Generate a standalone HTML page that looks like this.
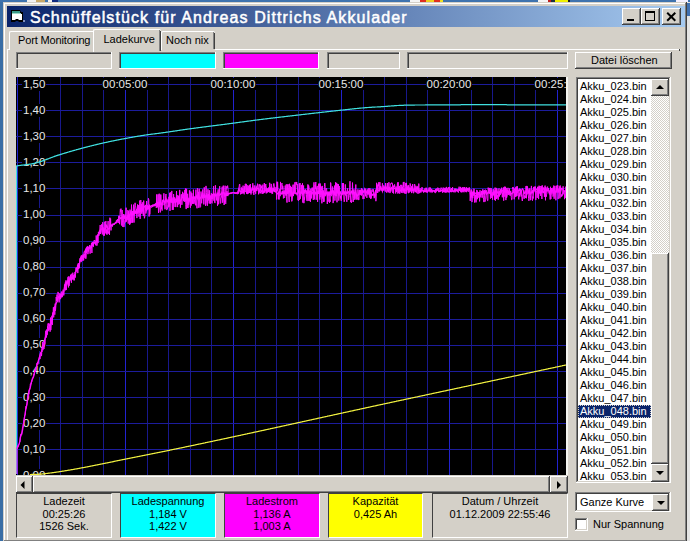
<!DOCTYPE html>
<html><head><meta charset="utf-8"><style>
html,body{margin:0;padding:0;width:690px;height:541px;overflow:hidden;background:#3a6ea5}
.t{position:absolute;font-family:"Liberation Sans",sans-serif;font-size:11px;line-height:13px;color:#000;white-space:pre}
</style></head><body>
<div style="position:absolute;left:0;top:0;width:690px;height:541px;background:#3a6ea5"></div><div style="position:absolute;left:3px;top:2px;width:684px;height:549px;background:#404040"></div><div style="position:absolute;left:3px;top:2px;width:683px;height:549px;background:#d4d0c8"></div><div style="position:absolute;left:4px;top:3px;width:682px;height:549px;background:#808080"></div><div style="position:absolute;left:4px;top:3px;width:681px;height:549px;background:#fff"></div><div style="position:absolute;left:5px;top:4px;width:680px;height:549px;background:#d4d0c8"></div><div style="position:absolute;left:7px;top:6px;width:678px;height:21px;background:linear-gradient(to right,#0a246a 0%,#a6caf0 100%)"></div><svg style="position:absolute;left:10px;top:9px" width="16" height="15" viewBox="0 0 16 15"><path d="M1 1 H10 L11 3 H13 V13 H9 L8 12 H6 L5 13 H1 Z" fill="#000"/><rect x="2" y="2" width="8" height="2" fill="#3a9a88"/><rect x="2" y="4" width="9" height="1" fill="#9ad8c8"/><path d="M2 5 H12 V11 H9 L8 10 H6 L5 11 H2 Z" fill="#fff"/><rect x="13" y="11" width="2" height="2" fill="#8090c0"/></svg><div class="t" style="left:30px;top:9px;color:#fff;font-size:16px;-webkit-text-stroke:0.5px #fff;letter-spacing:1.1px;line-height:18px">Schnüffelstück für Andreas Dittrichs Akkulader</div><div style="position:absolute;left:622px;top:8px;width:19px;height:17px;background:#404040;"><div style="position:absolute;left:0;top:0;width:18px;height:16px;background:#fff"></div><div style="position:absolute;left:1px;top:1px;width:17px;height:15px;background:#808080"></div><div style="position:absolute;left:1px;top:1px;width:16px;height:14px;background:#d4d0c8"></div></div><div style="position:absolute;left:627px;top:19px;width:7px;height:2px;background:#000"></div><div style="position:absolute;left:641px;top:8px;width:19px;height:17px;background:#404040;"><div style="position:absolute;left:0;top:0;width:18px;height:16px;background:#fff"></div><div style="position:absolute;left:1px;top:1px;width:17px;height:15px;background:#808080"></div><div style="position:absolute;left:1px;top:1px;width:16px;height:14px;background:#d4d0c8"></div></div><div style="position:absolute;left:645px;top:11px;width:8px;height:7px;border:1px solid #000;border-top-width:2px"></div><div style="position:absolute;left:662px;top:8px;width:19px;height:17px;background:#404040;"><div style="position:absolute;left:0;top:0;width:18px;height:16px;background:#fff"></div><div style="position:absolute;left:1px;top:1px;width:17px;height:15px;background:#808080"></div><div style="position:absolute;left:1px;top:1px;width:16px;height:14px;background:#d4d0c8"></div></div><svg style="position:absolute;left:666px;top:12px" width="11" height="10" viewBox="0 0 11 10"><path d="M1.2 0.8 L9.3 8.8 M9.3 0.8 L1.2 8.8" stroke="#000" stroke-width="2"/></svg><div style="position:absolute;left:7px;top:49px;width:673px;height:502px;border-top:1px solid #fff;border-left:1px solid #fff;background:#d4d0c8"></div><div style="position:absolute;left:679px;top:49px;width:1px;height:2px;background:#404040"></div><div style="position:absolute;left:9px;top:31px;width:86px;height:18px;background:#d4d0c8;border-top:1px solid #fff;border-left:1px solid #fff;border-radius:2px 2px 0 0"></div><div style="position:absolute;left:94px;top:32px;width:1px;height:17px;background:#808080"></div><div style="position:absolute;left:95px;top:33px;width:1px;height:16px;background:#404040"></div><div class="t" style="left:18px;top:34px;"><span style="letter-spacing:-0.15px">Port Monitoring</span></div><div style="position:absolute;left:161px;top:31px;width:53px;height:18px;background:#d4d0c8;border-top:1px solid #fff;border-left:1px solid #fff;border-radius:2px 2px 0 0"></div><div style="position:absolute;left:213px;top:32px;width:1px;height:17px;background:#808080"></div><div style="position:absolute;left:214px;top:33px;width:1px;height:16px;background:#404040"></div><div class="t" style="left:166px;top:34px;">Noch nix</div><div style="position:absolute;left:93px;top:29px;width:67px;height:22px;background:#d4d0c8;border-top:1px solid #fff;border-left:1px solid #fff;border-radius:2px 2px 0 0"></div><div style="position:absolute;left:159px;top:30px;width:1px;height:21px;background:#808080"></div><div style="position:absolute;left:160px;top:31px;width:1px;height:20px;background:#404040"></div><div class="t" style="left:103.5px;top:33px;">Ladekurve</div><div style="position:absolute;left:16px;top:52px;width:96px;height:17px;background:#fff"><div style="position:absolute;left:0;top:0;width:95px;height:16px;background:#808080"></div><div style="position:absolute;left:1px;top:1px;width:94px;height:15px;background:#404040"></div><div style="position:absolute;left:2px;top:2px;width:93px;height:14px;background:#d4d0c8"></div></div><div style="position:absolute;left:119px;top:52px;width:97px;height:17px;background:#fff"><div style="position:absolute;left:0;top:0;width:96px;height:16px;background:#808080"></div><div style="position:absolute;left:1px;top:1px;width:95px;height:15px;background:#404040"></div><div style="position:absolute;left:2px;top:2px;width:94px;height:14px;background:#00ffff"></div></div><div style="position:absolute;left:223px;top:52px;width:96px;height:17px;background:#fff"><div style="position:absolute;left:0;top:0;width:95px;height:16px;background:#808080"></div><div style="position:absolute;left:1px;top:1px;width:94px;height:15px;background:#404040"></div><div style="position:absolute;left:2px;top:2px;width:93px;height:14px;background:#ff00ff"></div></div><div style="position:absolute;left:327px;top:52px;width:73px;height:17px;background:#fff"><div style="position:absolute;left:0;top:0;width:72px;height:16px;background:#808080"></div><div style="position:absolute;left:1px;top:1px;width:71px;height:15px;background:#404040"></div><div style="position:absolute;left:2px;top:2px;width:70px;height:14px;background:#d4d0c8"></div></div><div style="position:absolute;left:407px;top:52px;width:161px;height:17px;background:#fff"><div style="position:absolute;left:0;top:0;width:160px;height:16px;background:#808080"></div><div style="position:absolute;left:1px;top:1px;width:159px;height:15px;background:#404040"></div><div style="position:absolute;left:2px;top:2px;width:158px;height:14px;background:#d4d0c8"></div></div><div style="position:absolute;left:575px;top:52px;width:97px;height:17px;background:#404040;"><div style="position:absolute;left:0;top:0;width:96px;height:16px;background:#fff"></div><div style="position:absolute;left:1px;top:1px;width:95px;height:15px;background:#808080"></div><div style="position:absolute;left:1px;top:1px;width:94px;height:14px;background:#d4d0c8"></div></div><div class="t" style="left:591px;top:54px;">Datei löschen</div><svg style="position:absolute;left:16px;top:77px" width="550" height="398" viewBox="16 77 550 398" shape-rendering="crispEdges"><rect x="16" y="77" width="550" height="398" fill="#000"/><rect x="17" y="77" width="1" height="398" fill="#2222d0"/><rect x="39" y="77" width="1" height="398" fill="#18188c"/><rect x="60" y="77" width="1" height="398" fill="#18188c"/><rect x="82" y="77" width="1" height="398" fill="#18188c"/><rect x="103" y="77" width="1" height="398" fill="#18188c"/><rect x="125" y="77" width="1" height="398" fill="#2222d0"/><rect x="147" y="77" width="1" height="398" fill="#18188c"/><rect x="168" y="77" width="1" height="398" fill="#18188c"/><rect x="190" y="77" width="1" height="398" fill="#18188c"/><rect x="211" y="77" width="1" height="398" fill="#18188c"/><rect x="233" y="77" width="1" height="398" fill="#2222d0"/><rect x="255" y="77" width="1" height="398" fill="#18188c"/><rect x="276" y="77" width="1" height="398" fill="#18188c"/><rect x="298" y="77" width="1" height="398" fill="#18188c"/><rect x="319" y="77" width="1" height="398" fill="#18188c"/><rect x="341" y="77" width="1" height="398" fill="#2222d0"/><rect x="363" y="77" width="1" height="398" fill="#18188c"/><rect x="384" y="77" width="1" height="398" fill="#18188c"/><rect x="406" y="77" width="1" height="398" fill="#18188c"/><rect x="427" y="77" width="1" height="398" fill="#18188c"/><rect x="449" y="77" width="1" height="398" fill="#2222d0"/><rect x="471" y="77" width="1" height="398" fill="#18188c"/><rect x="492" y="77" width="1" height="398" fill="#18188c"/><rect x="514" y="77" width="1" height="398" fill="#18188c"/><rect x="535" y="77" width="1" height="398" fill="#18188c"/><rect x="557" y="77" width="1" height="398" fill="#2222d0"/><rect x="16" y="84" width="550" height="1" fill="#1c1c9c"/><rect x="16" y="110" width="550" height="1" fill="#1c1c9c"/><rect x="16" y="136" width="550" height="1" fill="#1c1c9c"/><rect x="16" y="162" width="550" height="1" fill="#1c1c9c"/><rect x="16" y="188" width="550" height="1" fill="#1c1c9c"/><rect x="16" y="215" width="550" height="1" fill="#1c1c9c"/><rect x="16" y="241" width="550" height="1" fill="#1c1c9c"/><rect x="16" y="267" width="550" height="1" fill="#1c1c9c"/><rect x="16" y="293" width="550" height="1" fill="#1c1c9c"/><rect x="16" y="319" width="550" height="1" fill="#1c1c9c"/><rect x="16" y="345" width="550" height="1" fill="#1c1c9c"/><rect x="16" y="371" width="550" height="1" fill="#1c1c9c"/><rect x="16" y="397" width="550" height="1" fill="#1c1c9c"/><rect x="16" y="423" width="550" height="1" fill="#1c1c9c"/><rect x="16" y="449" width="550" height="1" fill="#1c1c9c"/><rect x="16" y="475" width="550" height="1" fill="#1c1c9c"/></svg><div style="position:absolute;left:16px;top:77px;width:550px;height:398px;overflow:hidden"><div class="t" style="left:6px;top:0.9000000000000057px;color:#e8e8e8;background:#000;padding:0 1px;font-size:11.5px">1,50</div><div class="t" style="left:6px;top:26.950000000000003px;color:#e8e8e8;background:#000;padding:0 1px;font-size:11.5px">1,40</div><div class="t" style="left:6px;top:53.0px;color:#e8e8e8;background:#000;padding:0 1px;font-size:11.5px">1,30</div><div class="t" style="left:6px;top:79.05000000000001px;color:#e8e8e8;background:#000;padding:0 1px;font-size:11.5px">1,20</div><div class="t" style="left:6px;top:105.10000000000002px;color:#e8e8e8;background:#000;padding:0 1px;font-size:11.5px">1,10</div><div class="t" style="left:6px;top:131.15px;color:#e8e8e8;background:#000;padding:0 1px;font-size:11.5px">1,00</div><div class="t" style="left:6px;top:157.20000000000002px;color:#e8e8e8;background:#000;padding:0 1px;font-size:11.5px">0,90</div><div class="t" style="left:6px;top:183.25px;color:#e8e8e8;background:#000;padding:0 1px;font-size:11.5px">0,80</div><div class="t" style="left:6px;top:209.3px;color:#e8e8e8;background:#000;padding:0 1px;font-size:11.5px">0,70</div><div class="t" style="left:6px;top:235.35000000000002px;color:#e8e8e8;background:#000;padding:0 1px;font-size:11.5px">0,60</div><div class="t" style="left:6px;top:261.4px;color:#e8e8e8;background:#000;padding:0 1px;font-size:11.5px">0,50</div><div class="t" style="left:6px;top:287.45000000000005px;color:#e8e8e8;background:#000;padding:0 1px;font-size:11.5px">0,40</div><div class="t" style="left:6px;top:313.5px;color:#e8e8e8;background:#000;padding:0 1px;font-size:11.5px">0,30</div><div class="t" style="left:6px;top:339.55000000000007px;color:#e8e8e8;background:#000;padding:0 1px;font-size:11.5px">0,20</div><div class="t" style="left:6px;top:365.6px;color:#e8e8e8;background:#000;padding:0 1px;font-size:11.5px">0,10</div><div class="t" style="left:6px;top:391.65px;color:#e8e8e8;background:#000;padding:0 1px;font-size:11.5px">0,00</div><div class="t" style="left:69.0px;top:0.9px;width:80px;text-align:center;color:#e8e8e8;font-size:11.5px"><span style="background:#000;padding:0 1px">00:05:00</span></div><div class="t" style="left:177.0px;top:0.9px;width:80px;text-align:center;color:#e8e8e8;font-size:11.5px"><span style="background:#000;padding:0 1px">00:10:00</span></div><div class="t" style="left:285.0px;top:0.9px;width:80px;text-align:center;color:#e8e8e8;font-size:11.5px"><span style="background:#000;padding:0 1px">00:15:00</span></div><div class="t" style="left:393.0px;top:0.9px;width:80px;text-align:center;color:#e8e8e8;font-size:11.5px"><span style="background:#000;padding:0 1px">00:20:00</span></div><div class="t" style="left:501.0px;top:0.9px;width:80px;text-align:center;color:#e8e8e8;font-size:11.5px"><span style="background:#000;padding:0 1px">00:25:00</span></div></div><svg style="position:absolute;left:16px;top:77px" width="550" height="398" viewBox="16 77 550 398"><polyline points="16.5,474.0 16.5,165.9 17.0,165.8 17.5,165.8 18.0,165.7 18.5,165.6 19.0,165.6 19.5,165.5 20.0,165.4 20.5,165.4 21.0,165.3 21.5,165.2 22.0,165.2 22.5,165.1 23.0,165.1 23.5,165.0 24.0,164.9 24.5,164.9 25.0,164.8 25.5,164.8 26.0,164.7 26.5,164.6 27.0,164.6 27.5,164.5 28.0,164.4 28.5,164.4 29.0,164.3 29.5,164.2 30.0,164.1 30.5,164.1 31.0,164.0 31.5,163.9 32.0,163.8 32.5,163.7 33.0,163.6 33.5,163.5 34.0,163.4 34.5,163.3 35.0,163.2 35.5,163.0 36.0,162.9 36.5,162.8 37.0,162.7 37.5,162.5 38.0,162.4 38.5,162.2 39.0,162.1 39.5,161.9 40.0,161.8 40.5,161.6 41.0,161.4 41.5,161.3 42.0,161.1 42.5,160.9 43.0,160.7 43.5,160.6 44.0,160.4 44.5,160.2 45.0,160.0 45.5,159.8 46.0,159.6 46.5,159.4 47.0,159.2 47.5,159.1 48.0,158.9 48.5,158.7 49.0,158.5 49.5,158.3 50.0,158.1 50.5,157.9 51.0,157.7 51.5,157.5 52.0,157.3 52.5,157.2 53.0,157.0 53.5,156.8 54.0,156.6 54.5,156.4 55.0,156.2 55.5,156.1 56.0,155.9 56.5,155.7 57.0,155.6 57.5,155.4 58.0,155.2 58.5,155.1 59.0,154.9 59.5,154.8 60.0,154.6 60.5,154.4 61.0,154.3 61.5,154.1 62.0,154.0 62.5,153.8 63.0,153.7 63.5,153.5 64.0,153.4 64.5,153.2 65.0,153.1 65.5,152.9 66.0,152.8 66.5,152.6 67.0,152.5 67.5,152.3 68.0,152.2 68.5,152.0 69.0,151.9 69.5,151.7 70.0,151.6 70.5,151.4 71.0,151.3 71.5,151.2 72.0,151.0 72.5,150.9 73.0,150.7 73.5,150.6 74.0,150.4 74.5,150.3 75.0,150.2 75.5,150.0 76.0,149.9 76.5,149.7 77.0,149.6 77.5,149.5 78.0,149.3 78.5,149.2 79.0,149.1 79.5,148.9 80.0,148.8 80.5,148.6 81.0,148.5 81.5,148.4 82.0,148.2 82.5,148.1 83.0,148.0 83.5,147.8 84.0,147.7 84.5,147.6 85.0,147.4 85.5,147.3 86.0,147.2 86.5,147.1 87.0,146.9 87.5,146.8 88.0,146.7 88.5,146.5 89.0,146.4 89.5,146.3 90.0,146.2 90.5,146.0 91.0,145.9 91.5,145.8 92.0,145.7 92.5,145.5 93.0,145.4 93.5,145.3 94.0,145.2 94.5,145.0 95.0,144.9 95.5,144.8 96.0,144.7 96.5,144.6 97.0,144.4 97.5,144.3 98.0,144.2 98.5,144.1 99.0,144.0 99.5,143.8 100.0,143.7 100.5,143.6 101.0,143.5 101.5,143.4 102.0,143.3 102.5,143.2 103.0,143.0 103.5,142.9 104.0,142.8 104.5,142.7 105.0,142.6 105.5,142.5 106.0,142.4 106.5,142.3 107.0,142.2 107.5,142.1 108.0,142.0 108.5,141.8 109.0,141.7 109.5,141.6 110.0,141.5 110.5,141.4 111.0,141.3 111.5,141.2 112.0,141.1 112.5,141.0 113.0,140.9 113.5,140.8 114.0,140.7 114.5,140.6 115.0,140.5 115.5,140.4 116.0,140.3 116.5,140.2 117.0,140.1 117.5,140.0 118.0,139.9 118.5,139.8 119.0,139.7 119.5,139.6 120.0,139.5 120.5,139.4 121.0,139.3 121.5,139.2 122.0,139.1 122.5,139.0 123.0,138.9 123.5,138.8 124.0,138.8 124.5,138.7 125.0,138.6 125.5,138.5 126.0,138.4 126.5,138.3 127.0,138.2 127.5,138.1 128.0,138.0 128.5,137.9 129.0,137.8 129.5,137.7 130.0,137.6 130.5,137.5 131.0,137.5 131.5,137.4 132.0,137.3 132.5,137.2 133.0,137.1 133.5,137.0 134.0,136.9 134.5,136.8 135.0,136.7 135.5,136.7 136.0,136.6 136.5,136.5 137.0,136.4 137.5,136.3 138.0,136.2 138.5,136.1 139.0,136.1 139.5,136.0 140.0,135.9 140.5,135.8 141.0,135.7 141.5,135.7 142.0,135.6 142.5,135.5 143.0,135.4 143.5,135.3 144.0,135.3 144.5,135.2 145.0,135.1 145.5,135.0 146.0,135.0 146.5,134.9 147.0,134.8 147.5,134.7 148.0,134.7 148.5,134.6 149.0,134.5 149.5,134.5 150.0,134.4 150.5,134.3 151.0,134.3 151.5,134.2 152.0,134.1 152.5,134.1 153.0,134.0 153.5,134.0 154.0,133.9 154.5,133.8 155.0,133.8 155.5,133.7 156.0,133.6 156.5,133.6 157.0,133.5 157.5,133.5 158.0,133.4 158.5,133.3 159.0,133.3 159.5,133.2 160.0,133.1 160.5,133.1 161.0,133.0 161.5,132.9 162.0,132.9 162.5,132.8 163.0,132.7 163.5,132.7 164.0,132.6 164.5,132.5 165.0,132.5 165.5,132.4 166.0,132.3 166.5,132.2 167.0,132.2 167.5,132.1 168.0,132.0 168.5,132.0 169.0,131.9 169.5,131.8 170.0,131.7 170.5,131.7 171.0,131.6 171.5,131.5 172.0,131.4 172.5,131.4 173.0,131.3 173.5,131.2 174.0,131.1 174.5,131.1 175.0,131.0 175.5,130.9 176.0,130.8 176.5,130.8 177.0,130.7 177.5,130.6 178.0,130.5 178.5,130.5 179.0,130.4 179.5,130.3 180.0,130.2 180.5,130.2 181.0,130.1 181.5,130.0 182.0,129.9 182.5,129.9 183.0,129.8 183.5,129.7 184.0,129.7 184.5,129.6 185.0,129.5 185.5,129.4 186.0,129.4 186.5,129.3 187.0,129.2 187.5,129.1 188.0,129.1 188.5,129.0 189.0,128.9 189.5,128.9 190.0,128.8 190.5,128.7 191.0,128.7 191.5,128.6 192.0,128.5 192.5,128.5 193.0,128.4 193.5,128.3 194.0,128.3 194.5,128.2 195.0,128.1 195.5,128.1 196.0,128.0 196.5,127.9 197.0,127.9 197.5,127.8 198.0,127.7 198.5,127.7 199.0,127.6 199.5,127.5 200.0,127.5 200.5,127.4 201.0,127.3 201.5,127.3 202.0,127.2 202.5,127.1 203.0,127.1 203.5,127.0 204.0,126.9 204.5,126.9 205.0,126.8 205.5,126.8 206.0,126.7 206.5,126.6 207.0,126.6 207.5,126.5 208.0,126.4 208.5,126.4 209.0,126.3 209.5,126.2 210.0,126.2 210.5,126.1 211.0,126.1 211.5,126.0 212.0,125.9 212.5,125.9 213.0,125.8 213.5,125.7 214.0,125.7 214.5,125.6 215.0,125.6 215.5,125.5 216.0,125.4 216.5,125.4 217.0,125.3 217.5,125.2 218.0,125.2 218.5,125.1 219.0,125.0 219.5,125.0 220.0,124.9 220.5,124.8 221.0,124.8 221.5,124.7 222.0,124.7 222.5,124.6 223.0,124.5 223.5,124.5 224.0,124.4 224.5,124.3 225.0,124.3 225.5,124.2 226.0,124.1 226.5,124.1 227.0,124.0 227.5,123.9 228.0,123.9 228.5,123.8 229.0,123.7 229.5,123.7 230.0,123.6 230.5,123.5 231.0,123.5 231.5,123.4 232.0,123.3 232.5,123.3 233.0,123.2 233.5,123.1 234.0,123.1 234.5,123.0 235.0,122.9 235.5,122.9 236.0,122.8 236.5,122.7 237.0,122.7 237.5,122.6 238.0,122.5 238.5,122.5 239.0,122.4 239.5,122.3 240.0,122.2 240.5,122.2 241.0,122.1 241.5,122.0 242.0,122.0 242.5,121.9 243.0,121.8 243.5,121.8 244.0,121.7 244.5,121.6 245.0,121.6 245.5,121.5 246.0,121.4 246.5,121.4 247.0,121.3 247.5,121.2 248.0,121.2 248.5,121.1 249.0,121.0 249.5,121.0 250.0,120.9 250.5,120.8 251.0,120.8 251.5,120.7 252.0,120.6 252.5,120.6 253.0,120.5 253.5,120.4 254.0,120.4 254.5,120.3 255.0,120.2 255.5,120.2 256.0,120.1 256.5,120.0 257.0,120.0 257.5,119.9 258.0,119.9 258.5,119.8 259.0,119.7 259.5,119.7 260.0,119.6 260.5,119.5 261.0,119.5 261.5,119.4 262.0,119.3 262.5,119.3 263.0,119.2 263.5,119.2 264.0,119.1 264.5,119.0 265.0,119.0 265.5,118.9 266.0,118.9 266.5,118.8 267.0,118.7 267.5,118.7 268.0,118.6 268.5,118.5 269.0,118.5 269.5,118.4 270.0,118.4 270.5,118.3 271.0,118.2 271.5,118.2 272.0,118.1 272.5,118.1 273.0,118.0 273.5,117.9 274.0,117.9 274.5,117.8 275.0,117.8 275.5,117.7 276.0,117.6 276.5,117.6 277.0,117.5 277.5,117.5 278.0,117.4 278.5,117.3 279.0,117.3 279.5,117.2 280.0,117.2 280.5,117.1 281.0,117.0 281.5,117.0 282.0,116.9 282.5,116.9 283.0,116.8 283.5,116.8 284.0,116.7 284.5,116.6 285.0,116.6 285.5,116.5 286.0,116.5 286.5,116.4 287.0,116.3 287.5,116.3 288.0,116.2 288.5,116.2 289.0,116.1 289.5,116.1 290.0,116.0 290.5,115.9 291.0,115.9 291.5,115.8 292.0,115.8 292.5,115.7 293.0,115.6 293.5,115.6 294.0,115.5 294.5,115.5 295.0,115.4 295.5,115.4 296.0,115.3 296.5,115.2 297.0,115.2 297.5,115.1 298.0,115.1 298.5,115.0 299.0,115.0 299.5,114.9 300.0,114.8 300.5,114.8 301.0,114.7 301.5,114.7 302.0,114.6 302.5,114.5 303.0,114.5 303.5,114.4 304.0,114.4 304.5,114.3 305.0,114.3 305.5,114.2 306.0,114.1 306.5,114.1 307.0,114.0 307.5,114.0 308.0,113.9 308.5,113.9 309.0,113.8 309.5,113.7 310.0,113.7 310.5,113.6 311.0,113.6 311.5,113.5 312.0,113.4 312.5,113.4 313.0,113.3 313.5,113.3 314.0,113.2 314.5,113.2 315.0,113.1 315.5,113.0 316.0,113.0 316.5,112.9 317.0,112.9 317.5,112.8 318.0,112.8 318.5,112.7 319.0,112.6 319.5,112.6 320.0,112.5 320.5,112.5 321.0,112.4 321.5,112.4 322.0,112.3 322.5,112.2 323.0,112.2 323.5,112.1 324.0,112.1 324.5,112.0 325.0,112.0 325.5,111.9 326.0,111.8 326.5,111.8 327.0,111.7 327.5,111.7 328.0,111.6 328.5,111.6 329.0,111.5 329.5,111.5 330.0,111.4 330.5,111.3 331.0,111.3 331.5,111.2 332.0,111.2 332.5,111.1 333.0,111.1 333.5,111.0 334.0,111.0 334.5,110.9 335.0,110.8 335.5,110.8 336.0,110.7 336.5,110.7 337.0,110.6 337.5,110.6 338.0,110.5 338.5,110.5 339.0,110.4 339.5,110.4 340.0,110.3 340.5,110.2 341.0,110.2 341.5,110.1 342.0,110.1 342.5,110.0 343.0,110.0 343.5,109.9 344.0,109.9 344.5,109.8 345.0,109.8 345.5,109.7 346.0,109.6 346.5,109.6 347.0,109.5 347.5,109.5 348.0,109.4 348.5,109.4 349.0,109.3 349.5,109.3 350.0,109.2 350.5,109.2 351.0,109.1 351.5,109.1 352.0,109.0 352.5,108.9 353.0,108.9 353.5,108.8 354.0,108.8 354.5,108.7 355.0,108.7 355.5,108.6 356.0,108.6 356.5,108.5 357.0,108.5 357.5,108.4 358.0,108.4 358.5,108.3 359.0,108.3 359.5,108.2 360.0,108.2 360.5,108.1 361.0,108.1 361.5,108.0 362.0,108.0 362.5,108.0 363.0,107.9 363.5,107.9 364.0,107.8 364.5,107.8 365.0,107.7 365.5,107.7 366.0,107.7 366.5,107.6 367.0,107.6 367.5,107.5 368.0,107.5 368.5,107.5 369.0,107.4 369.5,107.4 370.0,107.4 370.5,107.3 371.0,107.3 371.5,107.3 372.0,107.2 372.5,107.2 373.0,107.2 373.5,107.2 374.0,107.1 374.5,107.1 375.0,107.1 375.5,107.0 376.0,107.0 376.5,107.0 377.0,107.0 377.5,106.9 378.0,106.9 378.5,106.9 379.0,106.8 379.5,106.8 380.0,106.8 380.5,106.8 381.0,106.7 381.5,106.7 382.0,106.7 382.5,106.6 383.0,106.6 383.5,106.6 384.0,106.5 384.5,106.5 385.0,106.5 385.5,106.4 386.0,106.4 386.5,106.3 387.0,106.3 387.5,106.3 388.0,106.2 388.5,106.2 389.0,106.1 389.5,106.1 390.0,106.1 390.5,106.0 391.0,106.0 391.5,105.9 392.0,105.9 392.5,105.9 393.0,105.8 393.5,105.8 394.0,105.8 394.5,105.7 395.0,105.7 395.5,105.6 396.0,105.6 396.5,105.6 397.0,105.5 397.5,105.5 398.0,105.5 398.5,105.5 399.0,105.4 399.5,105.4 400.0,105.4 400.5,105.4 401.0,105.3 401.5,105.3 402.0,105.3 402.5,105.3 403.0,105.3 403.5,105.3 404.0,105.2 404.5,105.2 405.0,105.2 405.5,105.2 406.0,105.2 406.5,105.2 407.0,105.2 407.5,105.2 408.0,105.1 408.5,105.1 409.0,105.1 409.5,105.1 410.0,105.1 410.5,105.1 411.0,105.1 411.5,105.1 412.0,105.1 412.5,105.1 413.0,105.1 413.5,105.1 414.0,105.1 414.5,105.1 415.0,105.0 415.5,105.0 416.0,105.0 416.5,105.0 417.0,105.0 417.5,105.0 418.0,105.0 418.5,105.0 419.0,105.0 419.5,105.0 420.0,105.0 420.5,105.0 421.0,105.0 421.5,105.0 422.0,105.0 422.5,105.0 423.0,105.0 423.5,105.0 424.0,105.0 424.5,105.0 425.0,105.0 425.5,104.9 426.0,104.9 426.5,104.9 427.0,104.9 427.5,104.9 428.0,104.9 428.5,104.9 429.0,104.9 429.5,104.9 430.0,104.9 430.5,104.9 431.0,104.9 431.5,104.9 432.0,104.9 432.5,104.9 433.0,104.9 433.5,104.9 434.0,104.9 434.5,104.9 435.0,104.9 435.5,104.9 436.0,104.9 436.5,104.9 437.0,104.9 437.5,104.9 438.0,104.8 438.5,104.8 439.0,104.8 439.5,104.8 440.0,104.8 440.5,104.8 441.0,104.8 441.5,104.8 442.0,104.8 442.5,104.8 443.0,104.8 443.5,104.8 444.0,104.8 444.5,104.8 445.0,104.8 445.5,104.8 446.0,104.8 446.5,104.8 447.0,104.8 447.5,104.8 448.0,104.8 448.5,104.8 449.0,104.8 449.5,104.8 450.0,104.8 450.5,104.8 451.0,104.8 451.5,104.8 452.0,104.8 452.5,104.8 453.0,104.8 453.5,104.8 454.0,104.8 454.5,104.8 455.0,104.8 455.5,104.8 456.0,104.8 456.5,104.8 457.0,104.8 457.5,104.8 458.0,104.8 458.5,104.8 459.0,104.8 459.5,104.8 460.0,104.8 460.5,104.8 461.0,104.7 461.5,104.7 462.0,104.7 462.5,104.7 463.0,104.7 463.5,104.7 464.0,104.7 464.5,104.7 465.0,104.7 465.5,104.7 466.0,104.7 466.5,104.7 467.0,104.7 467.5,104.7 468.0,104.7 468.5,104.7 469.0,104.7 469.5,104.7 470.0,104.7 470.5,104.7 471.0,104.7 471.5,104.7 472.0,104.7 472.5,104.7 473.0,104.7 473.5,104.7 474.0,104.7 474.5,104.7 475.0,104.7 475.5,104.7 476.0,104.7 476.5,104.7 477.0,104.7 477.5,104.7 478.0,104.7 478.5,104.7 479.0,104.7 479.5,104.7 480.0,104.7 480.5,104.7 481.0,104.7 481.5,104.7 482.0,104.7 482.5,104.7 483.0,104.7 483.5,104.7 484.0,104.7 484.5,104.7 485.0,104.7 485.5,104.7 486.0,104.7 486.5,104.7 487.0,104.7 487.5,104.7 488.0,104.7 488.5,104.7 489.0,104.7 489.5,104.7 490.0,104.7 490.5,104.7 491.0,104.7 491.5,104.7 492.0,104.7 492.5,104.7 493.0,104.7 493.5,104.7 494.0,104.7 494.5,104.7 495.0,104.7 495.5,104.7 496.0,104.7 496.5,104.7 497.0,104.7 497.5,104.7 498.0,104.7 498.5,104.7 499.0,104.7 499.5,104.7 500.0,104.7 500.5,104.7 501.0,104.7 501.5,104.7 502.0,104.7 502.5,104.7 503.0,104.7 503.5,104.7 504.0,104.7 504.5,104.7 505.0,104.7 505.5,104.7 506.0,104.7 506.5,104.7 507.0,104.8 507.5,104.8 508.0,104.8 508.5,104.8 509.0,104.8 509.5,104.8 510.0,104.8 510.5,104.8 511.0,104.8 511.5,104.8 512.0,104.8 512.5,104.8 513.0,104.8 513.5,104.8 514.0,104.8 514.5,104.8 515.0,104.8 515.5,104.8 516.0,104.8 516.5,104.8 517.0,104.8 517.5,104.8 518.0,104.8 518.5,104.8 519.0,104.8 519.5,104.8 520.0,104.8 520.5,104.8 521.0,104.8 521.5,104.8 522.0,104.8 522.5,104.8 523.0,104.8 523.5,104.8 524.0,104.8 524.5,104.8 525.0,104.8 525.5,104.8 526.0,104.8 526.5,104.8 527.0,104.8 527.5,104.8 528.0,104.8 528.5,104.8 529.0,104.8 529.5,104.8 530.0,104.8 530.5,104.8 531.0,104.8 531.5,104.8 532.0,104.8 532.5,104.8 533.0,104.8 533.5,104.8 534.0,104.8 534.5,104.8 535.0,104.8 535.5,104.8 536.0,104.8 536.5,104.8 537.0,104.8 537.5,104.8 538.0,104.8 538.5,104.8 539.0,104.8 539.5,104.8 540.0,104.8 540.5,104.8 541.0,104.8 541.5,104.8 542.0,104.8 542.5,104.8 543.0,104.8 543.5,104.8 544.0,104.8 544.5,104.8 545.0,104.8 545.5,104.8 546.0,104.8 546.5,104.8 547.0,104.8 547.5,104.8 548.0,104.8 548.5,104.8 549.0,104.8 549.5,104.8 550.0,104.8 550.5,104.8 551.0,104.8 551.5,104.8 552.0,104.8 552.5,104.8 553.0,104.8 553.5,104.8 554.0,104.8 554.5,104.8 555.0,104.8 555.5,104.8 556.0,104.8 556.5,104.8 557.0,104.8 557.5,104.8 558.0,104.8 558.5,104.8 559.0,104.8 559.5,104.8 560.0,104.8 560.5,104.8 561.0,104.8 561.5,104.8 562.0,104.8 562.5,104.8 563.0,104.8 563.5,104.8 564.0,104.8 564.5,104.8 565.0,104.8 565.5,104.8 566.0,104.8" fill="none" stroke="#40e0e0" stroke-width="1.2"/><polyline points="17.0,474.0 17.0,450.0 17.0,448.6 17.4,446.2 17.7,445.6 18.1,446.6 18.4,445.7 18.8,444.5 19.2,444.2 19.5,442.1 19.9,442.0 20.2,437.7 20.6,434.8 21.0,433.8 21.3,435.1 21.7,434.6 22.0,431.8 22.4,428.3 22.8,426.9 23.1,427.1 23.5,422.6 23.8,421.9 24.2,419.1 24.6,415.6 24.9,415.5 25.3,414.8 25.6,409.1 26.0,406.1 26.4,408.2 26.7,405.0 27.1,403.4 27.4,398.3 27.8,395.8 28.2,394.5 28.5,393.0 28.9,394.3 29.2,389.8 29.6,389.9 30.0,389.2 30.3,383.8 30.7,384.1 31.0,384.3 31.4,382.3 31.8,381.9 32.1,380.0 32.5,379.8 32.8,378.0 33.2,377.9 33.6,377.1 33.9,374.3 34.3,374.9 34.6,369.8 35.0,371.9 35.4,370.6 35.7,368.1 36.1,369.5 36.4,366.8 36.8,363.4 37.2,363.9 37.5,362.1 37.9,364.4 38.2,363.2 38.6,359.6 39.0,359.6 39.3,358.5 39.7,356.7 40.0,359.1 40.4,355.2 40.8,354.9 41.1,352.5 41.5,356.1 41.8,352.4 42.2,352.0 42.6,341.9 42.9,350.2 43.3,346.3 43.6,346.9 44.0,348.9 44.4,341.5 44.7,344.5 45.1,343.3 45.4,334.1 45.8,330.7 46.2,337.7 46.5,333.1 46.9,329.3 47.2,334.8 47.6,325.3 48.0,323.9 48.3,323.1 48.7,326.2 49.0,330.0 49.4,326.7 49.8,323.6 50.1,331.7 50.5,317.6 50.8,330.1 51.2,324.2 51.6,323.0 51.9,315.7 52.3,324.9 52.6,312.6 53.0,314.8 53.4,307.3 53.7,317.4 54.1,309.0 54.4,306.5 54.8,314.7 55.2,303.6 55.5,310.7 55.9,305.5 56.2,297.0 56.6,301.1 57.0,294.5 57.3,297.7 57.7,300.7 58.0,291.9 58.4,294.0 58.8,293.9 59.1,302.4 59.5,297.9 59.8,293.3 60.2,297.6 60.6,293.8 60.9,297.5 61.3,291.8 61.6,291.5 62.0,297.2 62.4,296.7 62.7,295.2 63.1,289.7 63.4,290.9 63.8,295.4 64.2,290.5 64.5,284.5 64.9,285.9 65.2,286.3 65.6,290.3 66.0,280.3 66.3,290.0 66.7,286.6 67.0,285.1 67.4,284.0 67.8,277.6 68.1,276.8 68.5,287.4 68.8,276.4 69.2,285.8 69.6,278.5 69.9,277.7 70.3,277.5 70.6,274.7 71.0,278.0 71.4,282.8 71.7,273.8 72.1,274.8 72.4,279.4 72.8,272.7 73.2,276.3 73.5,279.4 73.9,275.8 74.2,280.4 74.6,278.2 75.0,271.9 75.3,277.5 75.7,270.0 76.0,267.7 76.4,269.7 76.8,267.4 77.1,269.7 77.5,264.7 77.8,273.1 78.2,263.4 78.6,268.9 78.9,263.0 79.3,268.2 79.6,260.0 80.0,258.0 80.4,258.4 80.7,257.7 81.1,262.1 81.4,255.3 81.8,258.8 82.2,260.8 82.5,255.9 82.9,254.5 83.2,256.8 83.6,260.5 84.0,257.4 84.3,255.4 84.7,253.8 85.0,258.0 85.4,252.1 85.8,258.8 86.1,257.3 86.5,247.4 86.8,252.3 87.2,246.2 87.6,246.4 87.9,254.2 88.3,250.9 88.6,246.9 89.0,246.8 89.4,248.5 89.7,245.0 90.1,253.7 90.4,247.8 90.8,247.6 91.2,245.9 91.5,243.0 91.9,253.0 92.2,242.3 92.6,245.9 93.0,242.0 93.3,246.7 93.7,243.4 94.0,240.6 94.4,241.1 94.8,240.0 95.1,242.2 95.5,244.4 95.8,245.3 96.2,235.5 96.6,240.7 96.9,245.7 97.3,242.7 97.6,234.5 98.0,243.1 98.4,232.0 98.7,234.7 99.1,231.5 99.4,230.5 99.8,230.5 100.2,225.0 100.5,233.4 100.9,232.2 101.2,229.2 101.6,224.8 102.0,224.0 102.3,234.4 102.7,222.2 103.0,224.5 103.4,235.3 103.8,235.8 104.1,229.7 104.5,235.5 104.8,221.7 105.2,233.2 105.6,223.7 105.9,221.1 106.3,234.1 106.6,229.5 107.0,234.7 107.4,233.1 107.7,228.3 108.1,221.1 108.4,233.6 108.8,232.1 109.2,231.5 109.5,234.9 109.9,217.7 110.2,226.6 110.6,218.6 111.0,230.4 111.3,225.4 111.7,225.2 112.0,225.1 112.4,226.6 112.8,223.7 113.1,223.4 113.5,224.1 113.8,225.0 114.2,224.0 114.6,224.4 114.9,223.6 115.3,222.5 115.6,222.6 116.0,223.5 116.4,220.4 116.7,222.8 117.1,221.6 117.4,219.1 117.8,220.8 118.2,223.0 118.5,218.2 118.9,216.0 119.2,221.8 119.6,224.2 120.0,214.4 120.3,209.4 120.7,211.6 121.0,208.6 121.4,225.4 121.8,225.4 122.1,210.0 122.5,220.9 122.8,226.9 123.2,222.6 123.6,214.1 123.9,227.1 124.3,224.1 124.6,223.1 125.0,219.1 125.4,214.6 125.7,222.3 126.1,207.7 126.4,221.6 126.8,218.9 127.2,220.2 127.5,219.0 127.9,210.1 128.2,223.6 128.6,211.2 129.0,219.7 129.3,216.2 129.7,224.9 130.0,209.6 130.4,223.5 130.8,217.7 131.1,218.8 131.5,204.6 131.8,222.8 132.2,213.3 132.6,222.6 132.9,219.6 133.3,208.9 133.6,204.6 134.0,222.6 134.4,214.0 134.7,206.9 135.1,202.8 135.4,205.4 135.8,207.0 136.2,211.2 136.5,208.9 136.9,218.1 137.2,212.8 137.6,204.4 138.0,212.3 138.3,205.1 138.7,214.8 139.0,216.7 139.4,213.6 139.8,200.5 140.1,218.9 140.5,212.5 140.8,200.0 141.2,213.0 141.6,204.1 141.9,213.9 142.3,202.3 142.6,211.7 143.0,212.8 143.4,216.0 143.7,200.6 144.1,214.1 144.4,218.3 144.8,216.9 145.2,205.8 145.5,204.9 145.9,213.5 146.2,210.7 146.6,201.0 147.0,209.6 147.3,205.2 147.7,209.3 148.0,208.3 148.4,198.3 148.8,199.7 149.1,216.5 149.5,204.7 149.8,214.5 150.2,207.7 150.6,207.1 150.9,206.6 151.3,206.7 151.6,207.5 152.0,207.3 152.4,205.1 152.7,206.8 153.1,205.5 153.4,204.7 153.8,205.5 154.2,206.3 154.5,204.2 154.9,205.9 155.2,204.6 155.6,205.8 156.0,203.1 156.3,207.9 156.7,194.4 157.0,200.9 157.4,207.4 157.8,203.6 158.1,194.4 158.5,213.0 158.8,206.1 159.2,193.7 159.6,207.5 159.9,207.8 160.3,212.4 160.6,194.7 161.0,194.5 161.4,209.1 161.7,206.3 162.1,210.6 162.4,200.2 162.8,205.3 163.2,201.9 163.5,198.6 163.9,193.3 164.2,205.1 164.6,203.3 165.0,209.3 165.3,204.6 165.7,195.3 166.0,194.0 166.4,208.6 166.8,210.1 167.1,207.5 167.5,209.1 167.8,204.2 168.2,199.5 168.6,207.3 168.9,196.8 169.3,206.5 169.6,192.8 170.0,210.9 170.4,195.8 170.7,192.3 171.1,201.3 171.4,202.2 171.8,190.9 172.2,210.0 172.5,209.3 172.9,197.5 173.2,209.9 173.6,194.1 174.0,202.8 174.3,202.0 174.7,197.3 175.0,206.9 175.4,200.3 175.8,207.1 176.1,203.8 176.5,191.0 176.8,200.8 177.2,195.1 177.6,207.1 177.9,197.6 178.3,204.6 178.6,195.8 179.0,195.7 179.4,203.9 179.7,189.9 180.1,203.9 180.4,207.7 180.8,199.3 181.2,194.3 181.5,194.4 181.9,204.8 182.2,199.0 182.6,191.8 183.0,197.9 183.3,194.6 183.7,201.0 184.0,192.9 184.4,200.5 184.8,189.9 185.1,201.5 185.5,188.5 185.8,204.6 186.2,209.1 186.6,188.8 186.9,208.0 187.3,207.6 187.6,193.8 188.0,208.0 188.4,201.4 188.7,204.7 189.1,200.3 189.4,190.3 189.8,197.9 190.2,207.1 190.5,207.8 190.9,191.5 191.2,205.6 191.6,193.3 192.0,193.2 192.3,203.6 192.7,197.9 193.0,204.0 193.4,189.6 193.8,203.6 194.1,203.7 194.5,199.8 194.8,199.3 195.2,204.0 195.6,205.3 195.9,189.6 196.3,203.9 196.6,203.8 197.0,208.3 197.4,188.2 197.7,189.5 198.1,195.2 198.4,191.9 198.8,207.8 199.2,188.7 199.5,198.5 199.9,206.1 200.2,207.4 200.6,206.6 201.0,191.5 201.3,200.0 201.7,203.3 202.0,197.8 202.4,195.1 202.8,189.4 203.1,194.9 203.5,195.5 203.8,204.4 204.2,187.3 204.6,190.2 204.9,195.5 205.3,204.1 205.6,205.8 206.0,185.9 206.4,192.4 206.7,202.0 207.1,205.1 207.4,205.8 207.8,189.2 208.2,189.7 208.5,200.4 208.9,197.0 209.2,203.5 209.6,190.3 210.0,198.1 210.3,203.8 210.7,196.3 211.0,197.7 211.4,193.3 211.8,202.9 212.1,203.3 212.5,194.2 212.8,199.1 213.2,194.6 213.6,186.2 213.9,200.7 214.3,195.6 214.6,202.3 215.0,203.1 215.4,185.3 215.7,192.5 216.1,194.9 216.4,200.4 216.8,194.6 217.2,195.2 217.5,205.8 217.9,192.7 218.2,189.3 218.6,204.3 219.0,199.0 219.3,194.4 219.7,186.2 220.0,194.9 220.4,203.4 220.8,203.3 221.1,197.7 221.5,197.7 221.8,190.6 222.2,186.7 222.6,202.7 222.9,201.0 223.3,185.6 223.6,191.1 224.0,205.0 224.4,204.1 224.7,197.5 225.1,185.7 225.4,202.6 225.8,203.8 226.2,190.9 226.5,186.6 226.9,186.2 227.2,188.1 227.6,185.6 228.0,188.3 228.3,194.3 228.7,193.6 229.0,193.1 229.4,193.3 229.8,192.9 230.1,193.4 230.5,192.8 230.8,193.8 231.2,193.7 231.6,192.7 231.9,192.5 232.3,192.3 232.6,192.6 233.0,192.3 233.4,192.8 233.7,192.8 234.1,192.4 234.4,192.4 234.8,193.6 235.2,192.8 235.5,193.8 235.9,193.2 236.2,192.7 236.6,193.1 237.0,193.3 237.3,194.1 237.7,194.0 238.0,192.3 238.4,193.7 238.8,188.9 239.1,187.0 239.5,184.0 239.8,184.4 240.2,192.7 240.6,194.4 240.9,192.7 241.3,193.9 241.6,190.6 242.0,193.6 242.4,193.4 242.7,189.6 243.1,185.6 243.4,191.5 243.8,193.1 244.2,194.3 244.5,186.3 244.9,188.5 245.2,183.9 245.6,183.9 246.0,190.5 246.3,183.9 246.7,193.8 247.0,190.3 247.4,194.1 247.8,185.2 248.1,189.1 248.5,193.4 248.8,186.1 249.2,191.0 249.6,185.1 249.9,191.4 250.3,184.0 250.6,190.7 251.0,194.5 251.4,191.1 251.7,190.1 252.1,187.4 252.4,189.3 252.8,183.2 253.2,193.2 253.5,191.7 253.9,194.9 254.2,185.4 254.6,190.6 255.0,191.6 255.3,188.6 255.7,193.8 256.0,185.7 256.4,186.3 256.8,191.1 257.1,188.4 257.5,183.7 257.8,186.8 258.2,188.2 258.6,194.3 258.9,184.8 259.3,184.1 259.6,186.0 260.0,189.2 260.4,191.5 260.7,184.7 261.1,186.1 261.4,188.0 261.8,186.1 262.2,194.0 262.5,190.4 262.9,184.6 263.2,193.6 263.6,192.0 264.0,192.9 264.3,183.0 264.7,191.2 265.0,186.7 265.4,187.0 265.8,184.0 266.1,193.3 266.5,189.9 266.8,193.2 267.2,192.7 267.6,188.4 267.9,189.2 268.3,192.1 268.6,187.7 269.0,188.4 269.4,189.6 269.7,182.8 270.1,192.7 270.4,187.9 270.8,192.5 271.2,183.9 271.5,187.1 271.9,192.7 272.2,188.2 272.6,193.8 273.0,187.0 273.3,186.3 273.7,183.6 274.0,183.4 274.4,187.9 274.8,187.4 275.1,192.0 275.5,188.8 275.8,188.6 276.2,186.9 276.6,199.5 276.9,181.7 277.3,191.1 277.6,181.9 278.0,190.1 278.4,199.2 278.7,191.8 279.1,199.5 279.4,193.3 279.8,189.0 280.2,196.2 280.5,181.9 280.9,189.7 281.2,184.9 281.6,184.3 282.0,183.1 282.3,189.4 282.7,185.7 283.0,186.7 283.4,198.4 283.8,194.9 284.1,197.8 284.5,197.5 284.8,197.7 285.2,185.6 285.6,191.8 285.9,186.4 286.3,184.3 286.6,196.5 287.0,202.6 287.4,184.6 287.7,191.5 288.1,184.2 288.4,187.9 288.8,198.0 289.2,202.0 289.5,183.8 289.9,187.9 290.2,196.5 290.6,185.9 291.0,194.7 291.3,187.0 291.7,201.3 292.0,201.3 292.4,198.0 292.8,186.1 293.1,184.6 293.5,196.1 293.8,188.4 294.2,184.8 294.6,191.5 294.9,182.3 295.3,192.9 295.6,192.3 296.0,181.9 296.4,184.6 296.7,182.1 297.1,185.1 297.4,184.3 297.8,200.0 298.2,199.9 298.5,200.8 298.9,194.6 299.2,183.5 299.6,199.8 300.0,183.0 300.3,198.8 300.7,196.0 301.0,196.2 301.4,184.9 301.8,191.5 302.1,192.9 302.5,183.3 302.8,202.6 303.2,192.6 303.6,185.5 303.9,203.2 304.3,197.4 304.6,199.8 305.0,194.5 305.4,192.4 305.7,190.8 306.1,191.2 306.4,194.2 306.8,200.7 307.2,200.8 307.5,191.8 307.9,184.4 308.2,200.8 308.6,185.3 309.0,187.1 309.3,189.4 309.7,200.8 310.0,192.4 310.4,201.8 310.8,188.8 311.1,190.5 311.5,198.4 311.8,188.2 312.2,187.5 312.6,190.8 312.9,188.3 313.3,200.0 313.6,188.1 314.0,182.3 314.4,199.4 314.7,191.9 315.1,184.8 315.4,188.7 315.8,182.0 316.2,199.8 316.5,187.7 316.9,188.3 317.2,185.9 317.6,201.9 318.0,192.9 318.3,187.8 318.7,183.7 319.0,192.2 319.4,183.8 319.8,199.6 320.1,183.4 320.5,185.1 320.8,197.2 321.2,186.5 321.6,190.4 321.9,203.3 322.3,185.9 322.6,198.5 323.0,189.8 323.4,201.9 323.7,191.7 324.1,201.7 324.4,186.3 324.8,183.1 325.2,187.3 325.5,195.5 325.9,190.6 326.2,188.6 326.6,188.2 327.0,195.0 327.3,204.0 327.7,191.6 328.0,201.9 328.4,199.9 328.8,199.1 329.1,192.5 329.5,202.7 329.8,199.6 330.2,201.8 330.6,182.5 330.9,183.8 331.3,196.2 331.6,195.6 332.0,194.2 332.4,186.5 332.7,187.5 333.1,203.1 333.4,199.9 333.8,191.3 334.2,189.7 334.5,185.6 334.9,200.6 335.2,198.3 335.6,182.3 336.0,195.8 336.3,196.2 336.7,182.9 337.0,202.3 337.4,184.0 337.8,185.5 338.1,193.7 338.5,184.3 338.8,200.6 339.2,186.0 339.6,194.3 339.9,196.0 340.3,198.5 340.6,195.8 341.0,200.5 341.4,200.9 341.7,192.2 342.1,189.9 342.4,183.0 342.8,194.5 343.2,191.3 343.5,183.2 343.9,198.0 344.2,201.8 344.6,199.8 345.0,195.4 345.3,184.4 345.7,190.6 346.0,195.8 346.4,194.5 346.8,201.8 347.1,194.6 347.5,188.4 347.8,190.8 348.2,191.5 348.6,199.9 348.9,197.9 349.3,195.5 349.6,187.8 350.0,181.2 350.4,193.5 350.7,202.1 351.1,200.3 351.4,202.8 351.8,201.1 352.2,193.8 352.5,182.6 352.9,194.3 353.2,202.0 353.6,198.4 354.0,189.4 354.3,199.8 354.7,192.8 355.0,198.7 355.4,195.0 355.8,184.5 356.1,199.8 356.5,193.8 356.8,198.9 357.2,198.7 357.6,199.5 357.9,189.4 358.3,196.3 358.6,200.1 359.0,199.6 359.4,190.2 359.7,194.6 360.1,194.5 360.4,190.4 360.8,195.0 361.2,191.5 361.5,188.2 361.9,193.4 362.2,188.8 362.6,189.4 363.0,199.1 363.3,194.9 363.7,195.0 364.0,198.9 364.4,191.3 364.8,188.5 365.1,189.5 365.5,196.3 365.8,189.3 366.2,195.1 366.6,196.3 366.9,197.9 367.3,189.7 367.6,194.5 368.0,192.5 368.4,193.8 368.7,188.3 369.1,191.4 369.4,197.5 369.8,188.2 370.2,194.3 370.5,198.7 370.9,189.5 371.2,198.5 371.6,193.4 372.0,189.9 372.3,189.3 372.7,189.4 373.0,191.9 373.4,189.4 373.8,194.3 374.1,198.2 374.5,197.3 374.8,196.4 375.2,192.1 375.6,189.8 375.9,201.2 376.3,193.5 376.6,182.8 377.0,185.1 377.4,184.7 377.7,193.0 378.1,185.3 378.4,186.2 378.8,182.2 379.2,188.4 379.5,190.3 379.9,182.2 380.2,188.7 380.6,186.1 381.0,190.3 381.3,188.5 381.7,188.5 382.0,190.7 382.4,183.3 382.8,185.8 383.1,189.4 383.5,186.8 383.8,185.4 384.2,188.3 384.6,189.2 384.9,187.6 385.3,191.6 385.6,183.1 386.0,185.9 386.4,192.5 386.7,192.5 387.1,189.9 387.4,183.0 387.8,191.0 388.2,187.1 388.5,190.5 388.9,182.2 389.2,190.0 389.6,187.9 390.0,193.1 390.3,183.5 390.7,184.2 391.0,184.0 391.4,183.8 391.8,182.6 392.1,183.0 392.5,184.0 392.8,192.9 393.2,185.8 393.6,193.5 393.9,185.5 394.3,187.0 394.6,184.4 395.0,187.6 395.4,187.6 395.7,193.5 396.1,186.5 396.4,189.7 396.8,190.1 397.2,185.7 397.5,182.6 397.9,193.6 398.2,182.2 398.6,192.8 399.0,191.7 399.3,185.9 399.7,193.7 400.0,193.0 400.4,186.4 400.8,184.8 401.1,187.9 401.5,192.7 401.8,184.9 402.2,190.6 402.6,187.5 402.9,193.1 403.3,182.2 403.6,187.1 404.0,181.9 404.4,193.0 404.7,189.9 405.1,193.9 405.4,186.4 405.8,182.9 406.2,193.6 406.5,182.9 406.9,190.0 407.2,186.5 407.6,189.7 408.0,185.3 408.3,192.7 408.7,185.3 409.0,192.8 409.4,188.5 409.8,191.9 410.1,183.4 410.5,185.0 410.8,186.6 411.2,188.9 411.6,193.1 411.9,185.9 412.3,190.4 412.6,184.1 413.0,190.7 413.4,193.1 413.7,193.2 414.1,191.1 414.4,184.0 414.8,184.6 415.2,189.9 415.5,192.2 415.9,185.8 416.2,187.1 416.6,192.1 417.0,193.2 417.3,187.2 417.7,189.1 418.0,193.8 418.4,192.7 418.8,183.6 419.1,193.2 419.5,193.0 419.8,189.2 420.2,188.3 420.6,192.3 420.9,192.5 421.3,190.6 421.6,190.0 422.0,187.1 422.4,189.0 422.7,189.1 423.1,189.8 423.4,192.1 423.8,190.0 424.2,190.8 424.5,190.6 424.9,188.5 425.2,191.0 425.6,191.4 426.0,187.7 426.3,192.4 426.7,187.9 427.0,190.0 427.4,192.4 427.8,192.2 428.1,189.3 428.5,189.5 428.8,188.3 429.2,187.4 429.6,189.9 429.9,188.8 430.3,187.5 430.6,189.2 431.0,192.3 431.4,189.8 431.7,188.9 432.1,189.8 432.4,192.2 432.8,190.2 433.2,191.3 433.5,189.9 433.9,190.3 434.2,190.2 434.6,191.2 435.0,190.3 435.3,192.9 435.7,192.8 436.0,191.1 436.4,191.7 436.8,188.5 437.1,189.7 437.5,188.3 437.8,187.6 438.2,188.6 438.6,192.1 438.9,188.1 439.3,191.6 439.6,190.9 440.0,190.2 440.4,191.6 440.7,188.6 441.1,187.6 441.4,188.2 441.8,189.5 442.2,189.9 442.5,192.7 442.9,190.2 443.2,187.5 443.6,191.5 444.0,192.0 444.3,192.1 444.7,188.0 445.0,188.2 445.4,192.6 445.8,190.2 446.1,187.1 446.5,187.1 446.8,192.6 447.2,188.5 447.6,191.4 447.9,189.5 448.3,187.1 448.6,187.9 449.0,192.5 449.4,190.3 449.7,186.9 450.1,188.9 450.4,191.4 450.8,189.5 451.2,190.0 451.5,188.1 451.9,190.4 452.2,189.0 452.6,187.0 453.0,192.0 453.3,190.8 453.7,192.1 454.0,192.3 454.4,190.7 454.8,188.5 455.1,192.4 455.5,190.9 455.8,189.6 456.2,191.2 456.6,190.5 456.9,189.2 457.3,189.8 457.6,189.6 458.0,191.1 458.4,192.6 458.7,191.0 459.1,186.7 459.4,190.9 459.8,189.2 460.2,188.6 460.5,186.9 460.9,192.2 461.2,188.1 461.6,190.1 462.0,191.5 462.3,187.2 462.7,190.4 463.0,192.3 463.4,191.6 463.8,187.2 464.1,189.6 464.5,187.2 464.8,189.4 465.2,191.8 465.6,190.0 465.9,188.4 466.3,187.2 466.6,192.2 467.0,188.7 467.4,190.4 467.7,188.2 468.1,187.7 468.4,191.7 468.8,190.7 469.2,188.8 469.5,187.5 469.9,192.1 470.2,200.9 470.6,195.0 471.0,197.8 471.3,195.7 471.7,189.5 472.0,202.1 472.4,195.1 472.8,198.2 473.1,193.8 473.5,195.4 473.8,188.7 474.2,188.9 474.6,202.5 474.9,200.9 475.3,199.4 475.6,194.9 476.0,202.4 476.4,199.0 476.7,189.9 477.1,191.3 477.4,199.2 477.8,192.0 478.2,195.6 478.5,196.1 478.9,197.8 479.2,192.3 479.6,201.4 480.0,190.2 480.3,194.0 480.7,197.3 481.0,196.8 481.4,193.6 481.8,192.1 482.1,197.8 482.5,195.7 482.8,189.2 483.2,197.3 483.6,199.6 483.9,202.1 484.3,189.9 484.6,195.3 485.0,201.7 485.4,199.7 485.7,199.6 486.1,193.3 486.4,190.3 486.8,193.0 487.2,198.7 487.5,200.7 487.9,200.5 488.2,187.6 488.6,192.2 489.0,188.9 489.3,188.1 489.7,191.6 490.0,187.9 490.4,198.6 490.8,197.3 491.1,188.2 491.5,189.3 491.8,198.0 492.2,192.3 492.6,199.7 492.9,191.2 493.3,189.1 493.6,192.0 494.0,193.3 494.4,194.4 494.7,200.0 495.1,187.6 495.4,200.7 495.8,193.8 496.2,187.9 496.5,199.0 496.9,188.7 497.2,197.6 497.6,195.3 498.0,199.4 498.3,199.7 498.7,190.3 499.0,188.4 499.4,196.5 499.8,191.4 500.1,195.1 500.5,194.1 500.8,189.1 501.2,193.4 501.6,187.7 501.9,189.6 502.3,197.3 502.6,192.6 503.0,192.4 503.4,187.5 503.7,200.7 504.1,187.4 504.4,186.7 504.8,196.7 505.2,193.6 505.5,186.8 505.9,200.1 506.2,187.9 506.6,197.8 507.0,196.6 507.3,195.7 507.7,189.6 508.0,187.8 508.4,194.8 508.8,192.0 509.1,193.2 509.5,188.5 509.8,194.4 510.2,195.8 510.6,190.9 510.9,192.6 511.3,197.5 511.6,199.8 512.0,199.6 512.4,189.7 512.7,187.0 513.1,187.5 513.4,187.3 513.8,189.5 514.2,199.3 514.5,191.9 514.9,190.7 515.2,197.1 515.6,193.6 516.0,186.8 516.3,196.4 516.7,186.5 517.0,195.9 517.4,186.3 517.8,192.8 518.1,190.9 518.5,198.9 518.8,199.4 519.2,192.6 519.6,196.3 519.9,196.7 520.3,189.2 520.6,189.0 521.0,193.0 521.4,196.3 521.7,194.6 522.1,200.2 522.4,201.0 522.8,196.5 523.2,192.9 523.5,190.5 523.9,198.3 524.2,198.9 524.6,195.5 525.0,195.7 525.3,196.3 525.7,197.9 526.0,186.1 526.4,198.3 526.8,185.9 527.1,194.4 527.5,186.5 527.8,190.1 528.2,194.6 528.6,198.3 528.9,200.8 529.3,198.0 529.6,188.4 530.0,188.9 530.4,195.5 530.7,200.2 531.1,190.2 531.4,185.9 531.8,190.4 532.2,198.2 532.5,200.6 532.9,196.5 533.2,198.5 533.6,186.9 534.0,189.5 534.3,188.9 534.7,186.6 535.0,188.8 535.4,186.6 535.8,200.1 536.1,191.1 536.5,191.6 536.8,191.2 537.2,197.9 537.6,186.8 537.9,191.0 538.3,187.2 538.6,199.1 539.0,185.7 539.4,191.8 539.7,186.3 540.1,190.2 540.4,195.8 540.8,186.0 541.2,187.0 541.5,186.6 541.9,199.0 542.2,185.3 542.6,192.0 543.0,187.2 543.3,187.5 543.7,189.9 544.0,189.2 544.4,196.8 544.8,186.6 545.1,185.6 545.5,200.3 545.8,186.8 546.2,196.8 546.6,194.5 546.9,193.6 547.3,187.4 547.6,186.6 548.0,189.4 548.4,189.6 548.7,190.2 549.1,189.8 549.4,194.4 549.8,192.5 550.2,199.5 550.5,186.8 550.9,199.0 551.2,191.4 551.6,191.3 552.0,188.1 552.3,193.2 552.7,192.6 553.0,196.6 553.4,194.9 553.8,185.5 554.1,198.8 554.5,193.0 554.8,186.1 555.2,192.8 555.6,193.1 555.9,200.3 556.3,185.6 556.6,191.1 557.0,192.7 557.4,190.3 557.7,185.0 558.1,199.1 558.4,196.6 558.8,196.0 559.2,186.3 559.5,187.2 559.9,198.4 560.2,185.5 560.6,190.7 561.0,197.1 561.3,196.7 561.7,194.4 562.0,196.3 562.4,195.7 562.8,190.5 563.1,186.3 563.5,193.7 563.8,194.3 564.2,190.4 564.6,199.2 564.9,194.3 565.3,197.8 565.6,186.5" fill="none" stroke="#ff10ff" stroke-width="1.0"/><polyline points="17.0,448.9 17.7,447.3 18.4,445.8 19.1,443.9 19.8,441.6 20.5,437.0 21.2,435.0 21.9,433.1 22.6,429.8 23.3,424.5 24.0,420.5 24.7,416.4 25.4,411.7 26.1,408.1 26.8,405.0 27.5,400.2 28.2,396.0 28.9,391.5 29.6,389.0 30.3,387.4 31.0,384.0 31.7,380.9 32.4,378.7 33.1,377.4 33.8,375.5 34.5,372.2 35.2,371.6 35.9,368.8 36.6,366.9 37.3,364.0 38.0,362.0 38.7,359.6 39.4,357.3 40.1,354.2 40.8,352.6 41.5,351.8 42.2,347.3 42.9,345.4 43.6,345.3 44.3,341.0 45.0,338.8 45.7,336.1 46.4,336.3 47.1,330.9 47.8,331.1 48.5,330.0 49.2,325.6 49.9,325.1 50.6,325.1 51.3,322.7 52.0,319.5 52.7,315.1 53.4,313.3 54.1,309.8 54.8,308.7 55.5,304.7 56.2,303.1 56.9,302.2 57.6,301.1 58.3,297.5 59.0,296.2 59.7,295.8 60.4,299.1 61.1,294.1 61.8,297.2 62.5,294.5 63.2,291.2 63.9,291.0 64.6,287.0 65.3,283.4 66.0,285.3 66.7,282.0 67.4,281.7 68.1,280.7 68.8,282.3 69.5,281.0 70.2,276.5 70.9,279.2 71.6,278.0 72.3,277.5 73.0,278.8 73.7,275.7 74.4,275.0 75.1,276.0 75.8,272.0 76.5,270.6 77.2,269.0 77.9,268.8 78.6,266.1 79.3,264.8 80.0,261.3 80.7,257.9 81.4,260.0 82.1,258.0 82.8,258.0 83.5,256.8 84.2,252.1 84.9,251.6 85.6,249.8 86.3,252.9 87.0,248.2 87.7,247.3 88.4,250.3 89.1,248.6 89.8,245.3 90.5,248.0 91.2,247.6 91.9,245.6 92.6,242.6 93.3,245.1 94.0,242.6 94.7,242.4 95.4,243.5 96.1,241.4 96.8,240.5 97.5,235.4 98.2,235.4 98.9,235.4 99.6,231.8 100.3,233.8 101.0,229.4 101.7,228.8 102.4,228.6 103.1,228.0 103.8,230.9 104.5,229.0 105.2,228.5 105.9,227.8 106.6,225.5 107.3,226.7 108.0,229.4 108.7,228.8 109.4,228.7 110.1,225.1 110.8,224.4 111.5,225.3 112.2,225.3 112.9,224.7 113.6,224.4 114.3,223.9 115.0,223.3 115.7,222.4 116.4,222.0 117.1,220.7 117.8,220.6 118.5,219.8 119.2,216.6 119.9,217.6 120.6,218.4 121.3,217.5 122.0,218.1 122.7,216.7 123.4,216.2 124.1,218.9 124.8,216.0 125.5,218.1 126.2,218.4 126.9,217.0 127.6,216.0 128.3,218.2 129.0,215.2 129.7,217.2 130.4,212.4 131.1,214.0 131.8,214.8 132.5,211.2 133.2,215.2 133.9,210.6 134.6,213.1 135.3,210.5 136.0,214.1 136.7,211.8 137.4,212.8 138.1,210.8 138.8,211.4 139.5,211.1 140.2,208.8 140.9,208.1 141.6,211.3 142.3,207.3 143.0,211.3 143.7,207.2 144.4,206.4 145.1,206.2 145.8,209.7 146.5,210.4 147.2,207.3 147.9,208.4 148.6,206.0 149.3,209.2 150.0,206.9 150.7,206.1 151.4,205.7 152.1,206.0 152.8,205.1 153.5,205.6 154.2,204.8 154.9,204.4 155.6,204.5 156.3,203.2 157.0,204.3 157.7,201.9 158.4,205.7 159.1,202.4 159.8,205.0 160.5,201.1 161.2,204.4 161.9,205.2 162.6,201.9 163.3,199.8 164.0,201.5 164.7,202.8 165.4,200.4 166.1,202.0 166.8,199.4 167.5,201.3 168.2,202.5 168.9,200.8 169.6,202.0 170.3,198.8 171.0,202.6 171.7,198.6 172.4,202.8 173.1,203.1 173.8,202.7 174.5,200.4 175.2,199.0 175.9,199.2 176.6,201.3 177.3,199.8 178.0,202.1 178.7,197.4 179.4,199.5 180.1,201.4 180.8,199.9 181.5,199.5 182.2,197.0 182.9,197.2 183.6,197.9 184.3,201.2 185.0,200.8 185.7,197.4 186.4,201.1 187.1,196.2 187.8,199.2 188.5,201.2 189.2,197.7 189.9,200.9 190.6,199.3 191.3,196.0 192.0,197.4 192.7,198.0 193.4,196.8 194.1,199.4 194.8,196.3 195.5,199.5 196.2,196.8 196.9,195.5 197.6,198.1 198.3,195.5 199.0,197.9 199.7,199.1 200.4,198.0 201.1,197.2 201.8,194.8 202.5,197.3 203.2,194.9 203.9,197.8 204.6,195.0 205.3,197.3 206.0,196.0 206.7,196.0 207.4,197.5 208.1,194.7 208.8,194.7 209.5,198.8 210.2,195.4 210.9,198.1 211.6,198.2 212.3,195.9 213.0,194.1 213.7,193.7 214.4,197.8 215.1,193.6 215.8,195.6 216.5,195.7 217.2,193.3 217.9,195.1 218.6,193.4 219.3,195.3 220.0,195.0 220.7,194.2 221.4,193.2 222.1,194.2 222.8,193.0 223.5,192.4 224.2,192.9 224.9,196.2 225.6,194.1 226.3,196.0 227.0,191.2 227.7,196.0 228.4,193.7 229.1,193.8 229.8,193.4 230.5,193.3 231.2,192.8 231.9,193.2 232.6,192.7 233.3,192.8 234.0,192.6 234.7,192.9 235.4,193.0 236.1,192.8 236.8,193.4 237.5,192.7 238.2,190.6 238.9,188.8 239.6,190.8 240.3,191.8 241.0,191.4 241.7,188.0 242.4,189.0 243.1,190.9 243.8,193.0 244.5,187.9 245.2,191.1 245.9,191.5 246.6,192.2 247.3,189.6 248.0,192.2 248.7,190.3 249.4,192.8 250.1,187.9 250.8,192.9 251.5,190.0 252.2,190.0 252.9,188.2 253.6,189.1 254.3,191.7 255.0,191.4 255.7,188.5 256.4,189.5 257.1,188.4 257.8,188.7 258.5,188.8 259.2,189.3 259.9,192.8 260.6,192.9 261.3,191.7 262.0,190.0 262.7,190.1 263.4,191.6 264.1,192.2 264.8,191.3 265.5,190.7 266.2,188.3 266.9,190.5 267.6,191.7 268.3,191.3 269.0,187.6 269.7,190.9 270.4,188.9 271.1,187.8 271.8,192.2 272.5,190.5 273.2,190.9 273.9,187.6 274.6,191.3 275.3,191.9 276.0,191.7 276.7,193.3 277.4,193.8 278.1,193.6 278.8,192.4 279.5,191.6 280.2,193.7 280.9,193.5 281.6,193.9 282.3,190.8 283.0,194.4 283.7,192.1 284.4,194.3 285.1,189.9 285.8,194.5 286.5,193.5 287.2,190.6 287.9,193.8 288.6,190.5 289.3,190.4 290.0,191.8 290.7,190.6 291.4,192.0 292.1,194.3 292.8,193.1 293.5,193.2 294.2,191.5 294.9,193.7 295.6,193.7 296.3,193.1 297.0,194.6 297.7,194.0 298.4,191.7 299.1,190.0 299.8,193.1 300.5,194.1 301.2,191.4 301.9,192.9 302.6,194.2 303.3,194.0 304.0,189.7 304.7,192.4 305.4,189.8 306.1,190.4 306.8,194.2 307.5,192.1 308.2,193.1 308.9,192.4 309.6,191.7 310.3,191.1 311.0,191.9 311.7,194.5 312.4,193.3 313.1,191.6 313.8,190.5 314.5,191.5 315.2,193.9 315.9,192.5 316.6,193.7 317.3,194.5 318.0,190.8 318.7,193.9 319.4,190.4 320.1,194.7 320.8,191.2 321.5,191.7 322.2,195.4 322.9,192.2 323.6,191.5 324.3,195.1 325.0,193.6 325.7,195.1 326.4,192.4 327.1,193.0 327.8,195.5 328.5,193.1 329.2,195.7 329.9,191.3 330.6,194.8 331.3,191.2 332.0,193.1 332.7,190.3 333.4,191.2 334.1,195.4 334.8,192.7 335.5,194.6 336.2,191.6 336.9,192.1 337.6,190.7 338.3,193.2 339.0,194.8 339.7,192.9 340.4,192.1 341.1,195.1 341.8,194.9 342.5,193.6 343.2,190.4 343.9,193.3 344.6,192.3 345.3,195.0 346.0,191.7 346.7,193.3 347.4,193.1 348.1,191.6 348.8,192.4 349.5,193.2 350.2,194.3 350.9,192.1 351.6,191.3 352.3,194.5 353.0,189.5 353.7,193.6 354.4,192.7 355.1,191.9 355.8,191.2 356.5,195.3 357.2,195.9 357.9,194.8 358.6,194.7 359.3,190.7 360.0,192.0 360.7,190.7 361.4,194.9 362.1,194.3 362.8,190.1 363.5,192.3 364.2,192.1 364.9,189.1 365.6,190.9 366.3,192.8 367.0,192.3 367.7,190.5 368.4,193.3 369.1,191.0 369.8,192.6 370.5,192.3 371.2,195.6 371.9,194.1 372.6,195.2 373.3,194.8 374.0,193.4 374.7,196.7 375.4,195.4 376.1,190.3 376.8,188.1 377.5,187.5 378.2,189.7 378.9,191.1 379.6,190.9 380.3,188.5 381.0,187.4 381.7,189.4 382.4,191.3 383.1,187.5 383.8,190.6 384.5,187.5 385.2,188.3 385.9,186.9 386.6,188.2 387.3,188.7 388.0,191.8 388.7,191.8 389.4,187.6 390.1,188.3 390.8,191.7 391.5,187.7 392.2,188.4 392.9,189.0 393.6,187.2 394.3,188.1 395.0,188.8 395.7,188.7 396.4,191.9 397.1,188.1 397.8,187.8 398.5,191.6 399.2,189.1 399.9,191.2 400.6,190.1 401.3,190.9 402.0,188.4 402.7,187.5 403.4,190.8 404.1,189.2 404.8,189.7 405.5,190.3 406.2,190.8 406.9,188.2 407.6,188.7 408.3,191.7 409.0,189.6 409.7,188.3 410.4,190.1 411.1,188.1 411.8,190.9 412.5,187.0 413.2,191.2 413.9,189.8 414.6,188.7 415.3,191.8 416.0,188.2 416.7,188.1 417.4,187.1 418.1,189.7 418.8,190.8 419.5,190.4 420.2,190.5 420.9,191.6 421.6,189.6 422.3,190.1 423.0,191.2 423.7,192.1 424.4,191.1 425.1,191.3 425.8,191.5 426.5,190.4 427.2,192.0 427.9,191.4 428.6,190.2 429.3,190.4 430.0,191.6 430.7,190.3 431.4,189.8 432.1,191.8 432.8,190.8 433.5,190.8 434.2,191.2 434.9,191.9 435.6,189.6 436.3,190.2 437.0,189.4 437.7,190.4 438.4,190.7 439.1,191.7 439.8,191.2 440.5,190.9 441.2,190.3 441.9,190.9 442.6,189.9 443.3,191.6 444.0,191.5 444.7,191.6 445.4,189.5 446.1,191.1 446.8,191.3 447.5,190.6 448.2,191.7 448.9,191.7 449.6,191.3 450.3,191.5 451.0,190.9 451.7,191.6 452.4,189.4 453.1,191.1 453.8,191.1 454.5,190.8 455.2,189.7 455.9,189.1 456.6,190.7 457.3,191.3 458.0,189.7 458.7,189.5 459.4,189.5 460.1,189.1 460.8,190.8 461.5,191.7 462.2,191.1 462.9,189.8 463.6,190.8 464.3,188.9 465.0,191.1 465.7,189.6 466.4,188.6 467.1,190.4 467.8,189.0 468.5,189.3 469.2,188.7 469.9,189.8 470.6,194.5 471.3,195.8 472.0,191.6 472.7,195.8 473.4,191.9 474.1,192.5 474.8,194.6 475.5,193.0 476.2,192.9 476.9,194.2 477.6,192.2 478.3,195.3 479.0,192.1 479.7,195.4 480.4,195.2 481.1,193.7 481.8,190.9 482.5,194.9 483.2,190.8 483.9,193.3 484.6,192.8 485.3,190.8 486.0,193.8 486.7,194.2 487.4,193.4 488.1,192.3 488.8,192.9 489.5,193.2 490.2,191.2 490.9,194.6 491.6,195.3 492.3,194.2 493.0,195.0 493.7,191.5 494.4,195.0 495.1,190.0 495.8,192.1 496.5,190.2 497.2,191.9 497.9,193.1 498.6,193.2 499.3,191.8 500.0,191.1 500.7,190.3 501.4,191.4 502.1,190.7 502.8,190.2 503.5,193.1 504.2,191.9 504.9,191.4 505.6,190.1 506.3,192.8 507.0,190.0 507.7,190.4 508.4,191.9 509.1,192.7 509.8,194.1 510.5,192.9 511.2,193.9 511.9,193.7 512.6,192.6 513.3,192.6 514.0,189.0 514.7,189.8 515.4,188.7 516.1,193.3 516.8,192.5 517.5,192.0 518.2,190.0 518.9,190.4 519.6,189.4 520.3,192.1 521.0,194.1 521.7,190.3 522.4,188.9 523.1,189.6 523.8,190.5 524.5,193.5 525.2,192.9 525.9,191.0 526.6,189.1 527.3,189.1 528.0,189.3 528.7,192.7 529.4,191.0 530.1,193.8 530.8,193.4 531.5,192.7 532.2,191.0 532.9,192.8 533.6,189.1 534.3,188.9 535.0,191.4 535.7,191.0 536.4,189.4 537.1,189.6 537.8,188.4 538.5,193.1 539.2,192.1 539.9,193.3 540.6,193.5 541.3,190.5 542.0,192.1 542.7,190.2 543.4,192.5 544.1,192.7 544.8,188.8 545.5,188.1 546.2,189.2 546.9,191.2 547.6,190.1 548.3,188.1 549.0,192.5 549.7,192.2 550.4,190.5 551.1,188.2 551.8,192.7 552.5,190.8 553.2,188.3 553.9,189.6 554.6,191.2 555.3,192.6 556.0,190.4 556.7,191.3 557.4,188.9 558.1,189.1 558.8,192.6 559.5,189.8 560.2,188.3 560.9,190.9 561.6,188.4 562.3,188.7 563.0,190.1 563.7,190.8 564.4,191.0 565.1,191.4 565.8,189.9" fill="none" stroke="#ff10ff" stroke-width="1.3"/><polyline points="30.0,474.5 30.5,474.5 31.0,474.5 31.5,474.4 32.0,474.4 32.5,474.4 33.0,474.4 33.5,474.4 34.0,474.4 34.5,474.4 35.0,474.4 35.5,474.4 36.0,474.4 36.5,474.3 37.0,474.3 37.5,474.3 38.0,474.3 38.5,474.3 39.0,474.2 39.5,474.2 40.0,474.2 40.5,474.1 41.0,474.1 41.5,474.1 42.0,474.0 42.5,473.9 43.0,473.9 43.5,473.8 44.0,473.8 44.5,473.7 45.0,473.7 45.5,473.6 46.0,473.5 46.5,473.5 47.0,473.4 47.5,473.4 48.0,473.3 48.5,473.2 49.0,473.2 49.5,473.1 50.0,473.0 50.5,473.0 51.0,472.9 51.5,472.8 52.0,472.8 52.5,472.7 53.0,472.6 53.5,472.6 54.0,472.5 54.5,472.4 55.0,472.3 55.5,472.3 56.0,472.2 56.5,472.1 57.0,472.1 57.5,472.0 58.0,471.9 58.5,471.8 59.0,471.8 59.5,471.7 60.0,471.6 60.5,471.5 61.0,471.5 61.5,471.4 62.0,471.3 62.5,471.2 63.0,471.1 63.5,471.1 64.0,471.0 64.5,470.9 65.0,470.8 65.5,470.7 66.0,470.7 66.5,470.6 67.0,470.5 67.5,470.4 68.0,470.3 68.5,470.2 69.0,470.2 69.5,470.1 70.0,470.0 70.5,469.9 71.0,469.8 71.5,469.7 72.0,469.6 72.5,469.6 73.0,469.5 73.5,469.4 74.0,469.3 74.5,469.2 75.0,469.1 75.5,469.0 76.0,468.9 76.5,468.8 77.0,468.8 77.5,468.7 78.0,468.6 78.5,468.5 79.0,468.4 79.5,468.3 80.0,468.2 80.5,468.1 81.0,468.0 81.5,467.9 82.0,467.8 82.5,467.7 83.0,467.6 83.5,467.6 84.0,467.5 84.5,467.4 85.0,467.3 85.5,467.2 86.0,467.1 86.5,467.0 87.0,466.9 87.5,466.8 88.0,466.7 88.5,466.6 89.0,466.5 89.5,466.4 90.0,466.3 90.5,466.2 91.0,466.1 91.5,466.0 92.0,465.9 92.5,465.8 93.0,465.7 93.5,465.6 94.0,465.5 94.5,465.4 95.0,465.3 95.5,465.2 96.0,465.1 96.5,465.0 97.0,464.9 97.5,464.8 98.0,464.7 98.5,464.6 99.0,464.5 99.5,464.4 100.0,464.3 100.5,464.2 101.0,464.1 101.5,464.0 102.0,463.9 102.5,463.8 103.0,463.7 103.5,463.6 104.0,463.5 104.5,463.4 105.0,463.3 105.5,463.2 106.0,463.1 106.5,463.0 107.0,462.9 107.5,462.8 108.0,462.7 108.5,462.6 109.0,462.5 109.5,462.4 110.0,462.3 110.5,462.2 111.0,462.1 111.5,462.0 112.0,461.9 112.5,461.8 113.0,461.7 113.5,461.6 114.0,461.4 114.5,461.3 115.0,461.2 115.5,461.1 116.0,461.0 116.5,460.9 117.0,460.8 117.5,460.7 118.0,460.6 118.5,460.5 119.0,460.4 119.5,460.3 120.0,460.2 120.5,460.1 121.0,460.0 121.5,459.9 122.0,459.8 122.5,459.7 123.0,459.6 123.5,459.5 124.0,459.4 124.5,459.3 125.0,459.2 125.5,459.1 126.0,459.0 126.5,458.9 127.0,458.8 127.5,458.7 128.0,458.6 128.5,458.5 129.0,458.4 129.5,458.3 130.0,458.2 130.5,458.1 131.0,458.0 131.5,457.9 132.0,457.8 132.5,457.7 133.0,457.6 133.5,457.5 134.0,457.4 134.5,457.3 135.0,457.2 135.5,457.1 136.0,457.0 136.5,456.9 137.0,456.8 137.5,456.7 138.0,456.6 138.5,456.5 139.0,456.4 139.5,456.3 140.0,456.2 140.5,456.1 141.0,456.0 141.5,455.9 142.0,455.8 142.5,455.7 143.0,455.6 143.5,455.5 144.0,455.4 144.5,455.3 145.0,455.2 145.5,455.1 146.0,455.0 146.5,454.9 147.0,454.8 147.5,454.7 148.0,454.6 148.5,454.5 149.0,454.4 149.5,454.3 150.0,454.2 150.5,454.1 151.0,454.0 151.5,453.9 152.0,453.8 152.5,453.7 153.0,453.6 153.5,453.5 154.0,453.4 154.5,453.3 155.0,453.2 155.5,453.1 156.0,453.0 156.5,452.9 157.0,452.8 157.5,452.7 158.0,452.6 158.5,452.5 159.0,452.4 159.5,452.3 160.0,452.2 160.5,452.1 161.0,452.0 161.5,451.9 162.0,451.8 162.5,451.7 163.0,451.6 163.5,451.5 164.0,451.4 164.5,451.3 165.0,451.2 165.5,451.1 166.0,451.0 166.5,450.9 167.0,450.8 167.5,450.7 168.0,450.6 168.5,450.5 169.0,450.4 169.5,450.3 170.0,450.1 170.5,450.0 171.0,449.9 171.5,449.8 172.0,449.7 172.5,449.6 173.0,449.5 173.5,449.4 174.0,449.3 174.5,449.2 175.0,449.1 175.5,449.0 176.0,448.9 176.5,448.8 177.0,448.7 177.5,448.6 178.0,448.5 178.5,448.4 179.0,448.3 179.5,448.2 180.0,448.1 180.5,448.0 181.0,447.9 181.5,447.8 182.0,447.7 182.5,447.6 183.0,447.5 183.5,447.4 184.0,447.3 184.5,447.2 185.0,447.0 185.5,446.9 186.0,446.8 186.5,446.7 187.0,446.6 187.5,446.5 188.0,446.4 188.5,446.3 189.0,446.2 189.5,446.1 190.0,446.0 190.5,445.9 191.0,445.8 191.5,445.7 192.0,445.6 192.5,445.5 193.0,445.4 193.5,445.3 194.0,445.2 194.5,445.1 195.0,445.0 195.5,444.9 196.0,444.7 196.5,444.6 197.0,444.5 197.5,444.4 198.0,444.3 198.5,444.2 199.0,444.1 199.5,444.0 200.0,443.9 200.5,443.8 201.0,443.7 201.5,443.6 202.0,443.5 202.5,443.4 203.0,443.3 203.5,443.2 204.0,443.1 204.5,443.0 205.0,442.9 205.5,442.7 206.0,442.6 206.5,442.5 207.0,442.4 207.5,442.3 208.0,442.2 208.5,442.1 209.0,442.0 209.5,441.9 210.0,441.8 210.5,441.7 211.0,441.6 211.5,441.5 212.0,441.4 212.5,441.3 213.0,441.2 213.5,441.0 214.0,440.9 214.5,440.8 215.0,440.7 215.5,440.6 216.0,440.5 216.5,440.4 217.0,440.3 217.5,440.2 218.0,440.1 218.5,440.0 219.0,439.9 219.5,439.8 220.0,439.7 220.5,439.6 221.0,439.4 221.5,439.3 222.0,439.2 222.5,439.1 223.0,439.0 223.5,438.9 224.0,438.8 224.5,438.7 225.0,438.6 225.5,438.5 226.0,438.4 226.5,438.3 227.0,438.2 227.5,438.1 228.0,437.9 228.5,437.8 229.0,437.7 229.5,437.6 230.0,437.5 230.5,437.4 231.0,437.3 231.5,437.2 232.0,437.1 232.5,437.0 233.0,436.9 233.5,436.8 234.0,436.7 234.5,436.6 235.0,436.4 235.5,436.3 236.0,436.2 236.5,436.1 237.0,436.0 237.5,435.9 238.0,435.8 238.5,435.7 239.0,435.6 239.5,435.5 240.0,435.4 240.5,435.3 241.0,435.2 241.5,435.0 242.0,434.9 242.5,434.8 243.0,434.7 243.5,434.6 244.0,434.5 244.5,434.4 245.0,434.3 245.5,434.2 246.0,434.1 246.5,434.0 247.0,433.9 247.5,433.7 248.0,433.6 248.5,433.5 249.0,433.4 249.5,433.3 250.0,433.2 250.5,433.1 251.0,433.0 251.5,432.9 252.0,432.8 252.5,432.7 253.0,432.6 253.5,432.4 254.0,432.3 254.5,432.2 255.0,432.1 255.5,432.0 256.0,431.9 256.5,431.8 257.0,431.7 257.5,431.6 258.0,431.5 258.5,431.4 259.0,431.2 259.5,431.1 260.0,431.0 260.5,430.9 261.0,430.8 261.5,430.7 262.0,430.6 262.5,430.5 263.0,430.4 263.5,430.3 264.0,430.2 264.5,430.1 265.0,429.9 265.5,429.8 266.0,429.7 266.5,429.6 267.0,429.5 267.5,429.4 268.0,429.3 268.5,429.2 269.0,429.1 269.5,429.0 270.0,428.9 270.5,428.7 271.0,428.6 271.5,428.5 272.0,428.4 272.5,428.3 273.0,428.2 273.5,428.1 274.0,428.0 274.5,427.9 275.0,427.8 275.5,427.6 276.0,427.5 276.5,427.4 277.0,427.3 277.5,427.2 278.0,427.1 278.5,427.0 279.0,426.9 279.5,426.8 280.0,426.7 280.5,426.6 281.0,426.4 281.5,426.3 282.0,426.2 282.5,426.1 283.0,426.0 283.5,425.9 284.0,425.8 284.5,425.7 285.0,425.6 285.5,425.5 286.0,425.4 286.5,425.2 287.0,425.1 287.5,425.0 288.0,424.9 288.5,424.8 289.0,424.7 289.5,424.6 290.0,424.5 290.5,424.4 291.0,424.3 291.5,424.1 292.0,424.0 292.5,423.9 293.0,423.8 293.5,423.7 294.0,423.6 294.5,423.5 295.0,423.4 295.5,423.3 296.0,423.2 296.5,423.1 297.0,422.9 297.5,422.8 298.0,422.7 298.5,422.6 299.0,422.5 299.5,422.4 300.0,422.3 300.5,422.2 301.0,422.1 301.5,422.0 302.0,421.8 302.5,421.7 303.0,421.6 303.5,421.5 304.0,421.4 304.5,421.3 305.0,421.2 305.5,421.1 306.0,421.0 306.5,420.9 307.0,420.7 307.5,420.6 308.0,420.5 308.5,420.4 309.0,420.3 309.5,420.2 310.0,420.1 310.5,420.0 311.0,419.9 311.5,419.8 312.0,419.6 312.5,419.5 313.0,419.4 313.5,419.3 314.0,419.2 314.5,419.1 315.0,419.0 315.5,418.9 316.0,418.8 316.5,418.7 317.0,418.6 317.5,418.4 318.0,418.3 318.5,418.2 319.0,418.1 319.5,418.0 320.0,417.9 320.5,417.8 321.0,417.7 321.5,417.6 322.0,417.5 322.5,417.3 323.0,417.2 323.5,417.1 324.0,417.0 324.5,416.9 325.0,416.8 325.5,416.7 326.0,416.6 326.5,416.5 327.0,416.4 327.5,416.2 328.0,416.1 328.5,416.0 329.0,415.9 329.5,415.8 330.0,415.7 330.5,415.6 331.0,415.5 331.5,415.4 332.0,415.3 332.5,415.2 333.0,415.0 333.5,414.9 334.0,414.8 334.5,414.7 335.0,414.6 335.5,414.5 336.0,414.4 336.5,414.3 337.0,414.2 337.5,414.1 338.0,413.9 338.5,413.8 339.0,413.7 339.5,413.6 340.0,413.5 340.5,413.4 341.0,413.3 341.5,413.2 342.0,413.1 342.5,413.0 343.0,412.9 343.5,412.7 344.0,412.6 344.5,412.5 345.0,412.4 345.5,412.3 346.0,412.2 346.5,412.1 347.0,412.0 347.5,411.9 348.0,411.8 348.5,411.7 349.0,411.5 349.5,411.4 350.0,411.3 350.5,411.2 351.0,411.1 351.5,411.0 352.0,410.9 352.5,410.8 353.0,410.7 353.5,410.6 354.0,410.4 354.5,410.3 355.0,410.2 355.5,410.1 356.0,410.0 356.5,409.9 357.0,409.8 357.5,409.7 358.0,409.6 358.5,409.5 359.0,409.4 359.5,409.3 360.0,409.1 360.5,409.0 361.0,408.9 361.5,408.8 362.0,408.7 362.5,408.6 363.0,408.5 363.5,408.4 364.0,408.3 364.5,408.2 365.0,408.1 365.5,407.9 366.0,407.8 366.5,407.7 367.0,407.6 367.5,407.5 368.0,407.4 368.5,407.3 369.0,407.2 369.5,407.1 370.0,407.0 370.5,406.9 371.0,406.7 371.5,406.6 372.0,406.5 372.5,406.4 373.0,406.3 373.5,406.2 374.0,406.1 374.5,406.0 375.0,405.9 375.5,405.8 376.0,405.7 376.5,405.6 377.0,405.4 377.5,405.3 378.0,405.2 378.5,405.1 379.0,405.0 379.5,404.9 380.0,404.8 380.5,404.7 381.0,404.6 381.5,404.5 382.0,404.4 382.5,404.3 383.0,404.2 383.5,404.0 384.0,403.9 384.5,403.8 385.0,403.7 385.5,403.6 386.0,403.5 386.5,403.4 387.0,403.3 387.5,403.2 388.0,403.1 388.5,403.0 389.0,402.9 389.5,402.8 390.0,402.6 390.5,402.5 391.0,402.4 391.5,402.3 392.0,402.2 392.5,402.1 393.0,402.0 393.5,401.9 394.0,401.8 394.5,401.7 395.0,401.6 395.5,401.5 396.0,401.4 396.5,401.2 397.0,401.1 397.5,401.0 398.0,400.9 398.5,400.8 399.0,400.7 399.5,400.6 400.0,400.5 400.5,400.4 401.0,400.3 401.5,400.2 402.0,400.1 402.5,400.0 403.0,399.9 403.5,399.8 404.0,399.6 404.5,399.5 405.0,399.4 405.5,399.3 406.0,399.2 406.5,399.1 407.0,399.0 407.5,398.9 408.0,398.8 408.5,398.7 409.0,398.6 409.5,398.5 410.0,398.4 410.5,398.3 411.0,398.1 411.5,398.0 412.0,397.9 412.5,397.8 413.0,397.7 413.5,397.6 414.0,397.5 414.5,397.4 415.0,397.3 415.5,397.2 416.0,397.1 416.5,397.0 417.0,396.9 417.5,396.8 418.0,396.7 418.5,396.5 419.0,396.4 419.5,396.3 420.0,396.2 420.5,396.1 421.0,396.0 421.5,395.9 422.0,395.8 422.5,395.7 423.0,395.6 423.5,395.5 424.0,395.4 424.5,395.3 425.0,395.2 425.5,395.0 426.0,394.9 426.5,394.8 427.0,394.7 427.5,394.6 428.0,394.5 428.5,394.4 429.0,394.3 429.5,394.2 430.0,394.1 430.5,394.0 431.0,393.9 431.5,393.8 432.0,393.7 432.5,393.5 433.0,393.4 433.5,393.3 434.0,393.2 434.5,393.1 435.0,393.0 435.5,392.9 436.0,392.8 436.5,392.7 437.0,392.6 437.5,392.5 438.0,392.4 438.5,392.3 439.0,392.2 439.5,392.1 440.0,391.9 440.5,391.8 441.0,391.7 441.5,391.6 442.0,391.5 442.5,391.4 443.0,391.3 443.5,391.2 444.0,391.1 444.5,391.0 445.0,390.9 445.5,390.8 446.0,390.7 446.5,390.6 447.0,390.4 447.5,390.3 448.0,390.2 448.5,390.1 449.0,390.0 449.5,389.9 450.0,389.8 450.5,389.7 451.0,389.6 451.5,389.5 452.0,389.4 452.5,389.3 453.0,389.2 453.5,389.1 454.0,389.0 454.5,388.8 455.0,388.7 455.5,388.6 456.0,388.5 456.5,388.4 457.0,388.3 457.5,388.2 458.0,388.1 458.5,388.0 459.0,387.9 459.5,387.8 460.0,387.7 460.5,387.6 461.0,387.5 461.5,387.3 462.0,387.2 462.5,387.1 463.0,387.0 463.5,386.9 464.0,386.8 464.5,386.7 465.0,386.6 465.5,386.5 466.0,386.4 466.5,386.3 467.0,386.2 467.5,386.1 468.0,386.0 468.5,385.9 469.0,385.7 469.5,385.6 470.0,385.5 470.5,385.4 471.0,385.3 471.5,385.2 472.0,385.1 472.5,385.0 473.0,384.9 473.5,384.8 474.0,384.7 474.5,384.6 475.0,384.5 475.5,384.4 476.0,384.2 476.5,384.1 477.0,384.0 477.5,383.9 478.0,383.8 478.5,383.7 479.0,383.6 479.5,383.5 480.0,383.4 480.5,383.3 481.0,383.2 481.5,383.1 482.0,383.0 482.5,382.9 483.0,382.7 483.5,382.6 484.0,382.5 484.5,382.4 485.0,382.3 485.5,382.2 486.0,382.1 486.5,382.0 487.0,381.9 487.5,381.8 488.0,381.7 488.5,381.6 489.0,381.5 489.5,381.4 490.0,381.3 490.5,381.1 491.0,381.0 491.5,380.9 492.0,380.8 492.5,380.7 493.0,380.6 493.5,380.5 494.0,380.4 494.5,380.3 495.0,380.2 495.5,380.1 496.0,380.0 496.5,379.9 497.0,379.8 497.5,379.6 498.0,379.5 498.5,379.4 499.0,379.3 499.5,379.2 500.0,379.1 500.5,379.0 501.0,378.9 501.5,378.8 502.0,378.7 502.5,378.6 503.0,378.5 503.5,378.4 504.0,378.3 504.5,378.2 505.0,378.0 505.5,377.9 506.0,377.8 506.5,377.7 507.0,377.6 507.5,377.5 508.0,377.4 508.5,377.3 509.0,377.2 509.5,377.1 510.0,377.0 510.5,376.9 511.0,376.8 511.5,376.7 512.0,376.5 512.5,376.4 513.0,376.3 513.5,376.2 514.0,376.1 514.5,376.0 515.0,375.9 515.5,375.8 516.0,375.7 516.5,375.6 517.0,375.5 517.5,375.4 518.0,375.3 518.5,375.2 519.0,375.1 519.5,374.9 520.0,374.8 520.5,374.7 521.0,374.6 521.5,374.5 522.0,374.4 522.5,374.3 523.0,374.2 523.5,374.1 524.0,374.0 524.5,373.9 525.0,373.8 525.5,373.7 526.0,373.6 526.5,373.4 527.0,373.3 527.5,373.2 528.0,373.1 528.5,373.0 529.0,372.9 529.5,372.8 530.0,372.7 530.5,372.6 531.0,372.5 531.5,372.4 532.0,372.3 532.5,372.2 533.0,372.1 533.5,372.0 534.0,371.8 534.5,371.7 535.0,371.6 535.5,371.5 536.0,371.4 536.5,371.3 537.0,371.2 537.5,371.1 538.0,371.0 538.5,370.9 539.0,370.8 539.5,370.7 540.0,370.6 540.5,370.5 541.0,370.3 541.5,370.2 542.0,370.1 542.5,370.0 543.0,369.9 543.5,369.8 544.0,369.7 544.5,369.6 545.0,369.5 545.5,369.4 546.0,369.3 546.5,369.2 547.0,369.1 547.5,369.0 548.0,368.8 548.5,368.7 549.0,368.6 549.5,368.5 550.0,368.4 550.5,368.3 551.0,368.2 551.5,368.1 552.0,368.0 552.5,367.9 553.0,367.8 553.5,367.7 554.0,367.6 554.5,367.5 555.0,367.4 555.5,367.2 556.0,367.1 556.5,367.0 557.0,366.9 557.5,366.8 558.0,366.7 558.5,366.6 559.0,366.5 559.5,366.4 560.0,366.3 560.5,366.2 561.0,366.1 561.5,366.0 562.0,365.9 562.5,365.7 563.0,365.6 563.5,365.5 564.0,365.4 564.5,365.3 565.0,365.2 565.5,365.1 566.0,365.0" fill="none" stroke="#f0f040" stroke-width="1.2"/></svg><div style="position:absolute;left:566px;top:77px;width:2px;height:398px;background:#f4f4f0"></div><div style="position:absolute;left:16px;top:476px;width:552px;height:17px;background:#e8e6e0"></div><div style="position:absolute;left:16px;top:476px;width:17px;height:17px;background:#404040;"><div style="position:absolute;left:0;top:0;width:16px;height:16px;background:#fff"></div><div style="position:absolute;left:1px;top:1px;width:15px;height:15px;background:#808080"></div><div style="position:absolute;left:1px;top:1px;width:14px;height:14px;background:#d4d0c8"></div></div><svg style="position:absolute;left:20px;top:481px" width="5" height="8"><path d="M4.5 0 V8 L0.5 4z" fill="#000"/></svg><div style="position:absolute;left:33px;top:476px;width:517px;height:17px;background:#404040;"><div style="position:absolute;left:0;top:0;width:516px;height:16px;background:#fff"></div><div style="position:absolute;left:1px;top:1px;width:515px;height:15px;background:#808080"></div><div style="position:absolute;left:1px;top:1px;width:514px;height:14px;background:#d4d0c8"></div></div><div style="position:absolute;left:550px;top:476px;width:18px;height:17px;background:#404040;"><div style="position:absolute;left:0;top:0;width:17px;height:16px;background:#fff"></div><div style="position:absolute;left:1px;top:1px;width:16px;height:15px;background:#808080"></div><div style="position:absolute;left:1px;top:1px;width:15px;height:14px;background:#d4d0c8"></div></div><svg style="position:absolute;left:557px;top:481px" width="5" height="8"><path d="M0 0 V8 L4 4z" fill="#000"/></svg><div style="position:absolute;left:16px;top:493px;width:94px;height:43px;background:#d4d0c8;border-top:1px solid #404040;border-left:1px solid #404040;border-bottom:1px solid #fff;border-right:1px solid #fff"></div><div class="t" style="left:16px;top:495px;width:96px;text-align:center;line-height:12.7px">Ladezeit<br>00:25:26<br>1526 Sek.</div><div style="position:absolute;left:120px;top:493px;width:94px;height:43px;background:#00ffff;border-top:1px solid #404040;border-left:1px solid #404040;border-bottom:1px solid #fff;border-right:1px solid #fff"></div><div class="t" style="left:120px;top:495px;width:96px;text-align:center;line-height:12.7px">Ladespannung<br>1,184 V<br>1,422 V</div><div style="position:absolute;left:224px;top:493px;width:94px;height:43px;background:#ff00ff;border-top:1px solid #404040;border-left:1px solid #404040;border-bottom:1px solid #fff;border-right:1px solid #fff"></div><div class="t" style="left:224px;top:495px;width:96px;text-align:center;line-height:12.7px">Ladestrom<br>1,136 A<br>1,003 A</div><div style="position:absolute;left:328px;top:493px;width:93px;height:43px;background:#ffff00;border-top:1px solid #404040;border-left:1px solid #404040;border-bottom:1px solid #fff;border-right:1px solid #fff"></div><div class="t" style="left:328px;top:495px;width:95px;text-align:center;line-height:12.7px">Kapazität<br>0,425 Ah</div><div style="position:absolute;left:432px;top:493px;width:134px;height:43px;background:#d4d0c8;border-top:1px solid #404040;border-left:1px solid #404040;border-bottom:1px solid #fff;border-right:1px solid #fff"></div><div class="t" style="left:432px;top:495px;width:136px;text-align:center;line-height:12.7px">Datum / Uhrzeit<br>01.12.2009 22:55:46</div><div style="position:absolute;left:576px;top:77px;width:95px;height:406px;background:#fff"><div style="position:absolute;left:0;top:0;width:94px;height:405px;background:#808080"></div><div style="position:absolute;left:1px;top:1px;width:93px;height:404px;background:#d4d0c8"></div><div style="position:absolute;left:1px;top:1px;width:92px;height:403px;background:#404040"></div><div style="position:absolute;left:2px;top:2px;width:91px;height:402px;background:#fff"></div></div><div style="position:absolute;left:578px;top:79px;width:73px;height:402px;overflow:hidden"><div class="t" style="position:absolute;left:0;top:1px;width:73px;height:13px;line-height:13px;"><span style="padding-left:2px">Akku_023.bin</span></div><div class="t" style="position:absolute;left:0;top:14px;width:73px;height:13px;line-height:13px;"><span style="padding-left:2px">Akku_024.bin</span></div><div class="t" style="position:absolute;left:0;top:27px;width:73px;height:13px;line-height:13px;"><span style="padding-left:2px">Akku_025.bin</span></div><div class="t" style="position:absolute;left:0;top:40px;width:73px;height:13px;line-height:13px;"><span style="padding-left:2px">Akku_026.bin</span></div><div class="t" style="position:absolute;left:0;top:53px;width:73px;height:13px;line-height:13px;"><span style="padding-left:2px">Akku_027.bin</span></div><div class="t" style="position:absolute;left:0;top:66px;width:73px;height:13px;line-height:13px;"><span style="padding-left:2px">Akku_028.bin</span></div><div class="t" style="position:absolute;left:0;top:79px;width:73px;height:13px;line-height:13px;"><span style="padding-left:2px">Akku_029.bin</span></div><div class="t" style="position:absolute;left:0;top:92px;width:73px;height:13px;line-height:13px;"><span style="padding-left:2px">Akku_030.bin</span></div><div class="t" style="position:absolute;left:0;top:105px;width:73px;height:13px;line-height:13px;"><span style="padding-left:2px">Akku_031.bin</span></div><div class="t" style="position:absolute;left:0;top:118px;width:73px;height:13px;line-height:13px;"><span style="padding-left:2px">Akku_032.bin</span></div><div class="t" style="position:absolute;left:0;top:131px;width:73px;height:13px;line-height:13px;"><span style="padding-left:2px">Akku_033.bin</span></div><div class="t" style="position:absolute;left:0;top:144px;width:73px;height:13px;line-height:13px;"><span style="padding-left:2px">Akku_034.bin</span></div><div class="t" style="position:absolute;left:0;top:157px;width:73px;height:13px;line-height:13px;"><span style="padding-left:2px">Akku_035.bin</span></div><div class="t" style="position:absolute;left:0;top:170px;width:73px;height:13px;line-height:13px;"><span style="padding-left:2px">Akku_036.bin</span></div><div class="t" style="position:absolute;left:0;top:183px;width:73px;height:13px;line-height:13px;"><span style="padding-left:2px">Akku_037.bin</span></div><div class="t" style="position:absolute;left:0;top:196px;width:73px;height:13px;line-height:13px;"><span style="padding-left:2px">Akku_038.bin</span></div><div class="t" style="position:absolute;left:0;top:209px;width:73px;height:13px;line-height:13px;"><span style="padding-left:2px">Akku_039.bin</span></div><div class="t" style="position:absolute;left:0;top:222px;width:73px;height:13px;line-height:13px;"><span style="padding-left:2px">Akku_040.bin</span></div><div class="t" style="position:absolute;left:0;top:235px;width:73px;height:13px;line-height:13px;"><span style="padding-left:2px">Akku_041.bin</span></div><div class="t" style="position:absolute;left:0;top:248px;width:73px;height:13px;line-height:13px;"><span style="padding-left:2px">Akku_042.bin</span></div><div class="t" style="position:absolute;left:0;top:261px;width:73px;height:13px;line-height:13px;"><span style="padding-left:2px">Akku_043.bin</span></div><div class="t" style="position:absolute;left:0;top:274px;width:73px;height:13px;line-height:13px;"><span style="padding-left:2px">Akku_044.bin</span></div><div class="t" style="position:absolute;left:0;top:287px;width:73px;height:13px;line-height:13px;"><span style="padding-left:2px">Akku_045.bin</span></div><div class="t" style="position:absolute;left:0;top:300px;width:73px;height:13px;line-height:13px;"><span style="padding-left:2px">Akku_046.bin</span></div><div class="t" style="position:absolute;left:0;top:313px;width:73px;height:13px;line-height:13px;"><span style="padding-left:2px">Akku_047.bin</span></div><div class="t" style="position:absolute;left:0;top:326px;width:73px;height:13px;line-height:13px;background:#0a246a;color:#fff;outline:1px dotted #d4d0c8;outline-offset:-1px;"><span style="padding-left:2px">Akku_048.bin</span></div><div class="t" style="position:absolute;left:0;top:339px;width:73px;height:13px;line-height:13px;"><span style="padding-left:2px">Akku_049.bin</span></div><div class="t" style="position:absolute;left:0;top:352px;width:73px;height:13px;line-height:13px;"><span style="padding-left:2px">Akku_050.bin</span></div><div class="t" style="position:absolute;left:0;top:365px;width:73px;height:13px;line-height:13px;"><span style="padding-left:2px">Akku_051.bin</span></div><div class="t" style="position:absolute;left:0;top:378px;width:73px;height:13px;line-height:13px;"><span style="padding-left:2px">Akku_052.bin</span></div><div class="t" style="position:absolute;left:0;top:391px;width:73px;height:13px;line-height:13px;"><span style="padding-left:2px">Akku_053.bin</span></div></div><div style="position:absolute;left:651px;top:79px;width:18px;height:402px;background:repeating-conic-gradient(#fff 0 25%,#d4d0c8 0 50%) 0 0/2px 2px"></div><div style="position:absolute;left:651px;top:79px;width:18px;height:17px;background:#404040;"><div style="position:absolute;left:0;top:0;width:17px;height:16px;background:#fff"></div><div style="position:absolute;left:1px;top:1px;width:16px;height:15px;background:#808080"></div><div style="position:absolute;left:1px;top:1px;width:15px;height:14px;background:#d4d0c8"></div></div><svg style="position:absolute;left:656px;top:85px" width="8" height="5"><path d="M0 4 H8 L4 0z" fill="#000"/></svg><div style="position:absolute;left:651px;top:253px;width:18px;height:211px;background:#404040;"><div style="position:absolute;left:0;top:0;width:17px;height:210px;background:#fff"></div><div style="position:absolute;left:1px;top:1px;width:16px;height:209px;background:#808080"></div><div style="position:absolute;left:1px;top:1px;width:15px;height:208px;background:#d4d0c8"></div></div><div style="position:absolute;left:651px;top:464px;width:18px;height:18px;background:#404040;"><div style="position:absolute;left:0;top:0;width:17px;height:17px;background:#fff"></div><div style="position:absolute;left:1px;top:1px;width:16px;height:16px;background:#808080"></div><div style="position:absolute;left:1px;top:1px;width:15px;height:15px;background:#d4d0c8"></div></div><svg style="position:absolute;left:656px;top:471px" width="8" height="5"><path d="M0 0 H8 L4 4z" fill="#000"/></svg><div style="position:absolute;left:575px;top:492px;width:96px;height:20px;background:#fff"><div style="position:absolute;left:0;top:0;width:95px;height:19px;background:#808080"></div><div style="position:absolute;left:1px;top:1px;width:94px;height:18px;background:#d4d0c8"></div><div style="position:absolute;left:1px;top:1px;width:93px;height:17px;background:#404040"></div><div style="position:absolute;left:2px;top:2px;width:92px;height:16px;background:#fff"></div></div><div class="t" style="left:580px;top:496px;">Ganze Kurve</div><div style="position:absolute;left:652px;top:494px;width:17px;height:17px;background:#404040;"><div style="position:absolute;left:0;top:0;width:16px;height:16px;background:#fff"></div><div style="position:absolute;left:1px;top:1px;width:15px;height:15px;background:#808080"></div><div style="position:absolute;left:1px;top:1px;width:14px;height:14px;background:#d4d0c8"></div></div><svg style="position:absolute;left:657px;top:501px" width="8" height="5"><path d="M0 0 H8 L4 4z" fill="#000"/></svg><div style="position:absolute;left:575px;top:518px;width:13px;height:13px;background:#fff"><div style="position:absolute;left:0;top:0;width:12px;height:12px;background:#808080"></div><div style="position:absolute;left:1px;top:1px;width:11px;height:11px;background:#d4d0c8"></div><div style="position:absolute;left:1px;top:1px;width:10px;height:10px;background:#404040"></div><div style="position:absolute;left:2px;top:2px;width:9px;height:9px;background:#fff"></div></div><div class="t" style="left:593px;top:518px;">Nur Spannung</div><div style="position:absolute;left:4px;top:540px;width:682px;height:1px;background:#808080"></div><div style="position:absolute;left:687px;top:0;width:3px;height:541px;background:#e4e4e4"></div><div style="position:absolute;left:0;top:0;width:3px;height:541px;background:#3a6ea5"></div><div style="position:absolute;left:0;top:0;width:690px;height:2px;background:#3f73ae"></div><div style="position:absolute;left:27px;top:0;width:9px;height:2px;background:#f0f0f0"></div><div style="position:absolute;left:36px;top:0;width:9px;height:2px;background:#c8a868"></div><div style="position:absolute;left:48px;top:0;width:4px;height:2px;background:#f0f0f0"></div><div style="position:absolute;left:52px;top:0;width:6px;height:2px;background:#102a80"></div><div style="position:absolute;left:410px;top:0;width:10px;height:2px;background:#f4f4f4"></div><div style="position:absolute;left:420px;top:0;width:6px;height:2px;background:#e03020"></div><div style="position:absolute;left:426px;top:0;width:8px;height:2px;background:#f0d020"></div><div style="position:absolute;left:434px;top:0;width:6px;height:2px;background:#e03020"></div><div style="position:absolute;left:440px;top:0;width:3px;height:2px;background:#f0e020"></div><div style="position:absolute;left:538px;top:0;width:10px;height:2px;background:#f4f4f4"></div><div style="position:absolute;left:548px;top:0;width:3px;height:2px;background:#c02020"></div><div style="position:absolute;left:551px;top:0;width:4px;height:2px;background:#203040"></div><div style="position:absolute;left:555px;top:0;width:13px;height:2px;background:#f0f000"></div><div style="position:absolute;left:568px;top:0;width:2px;height:2px;background:#202020"></div><div style="position:absolute;left:676px;top:0;width:12px;height:2px;background:#f4f0ff"></div><div style="position:absolute;left:687px;top:3px;width:3px;height:13px;background:#4070b0"></div>
</body></html>
